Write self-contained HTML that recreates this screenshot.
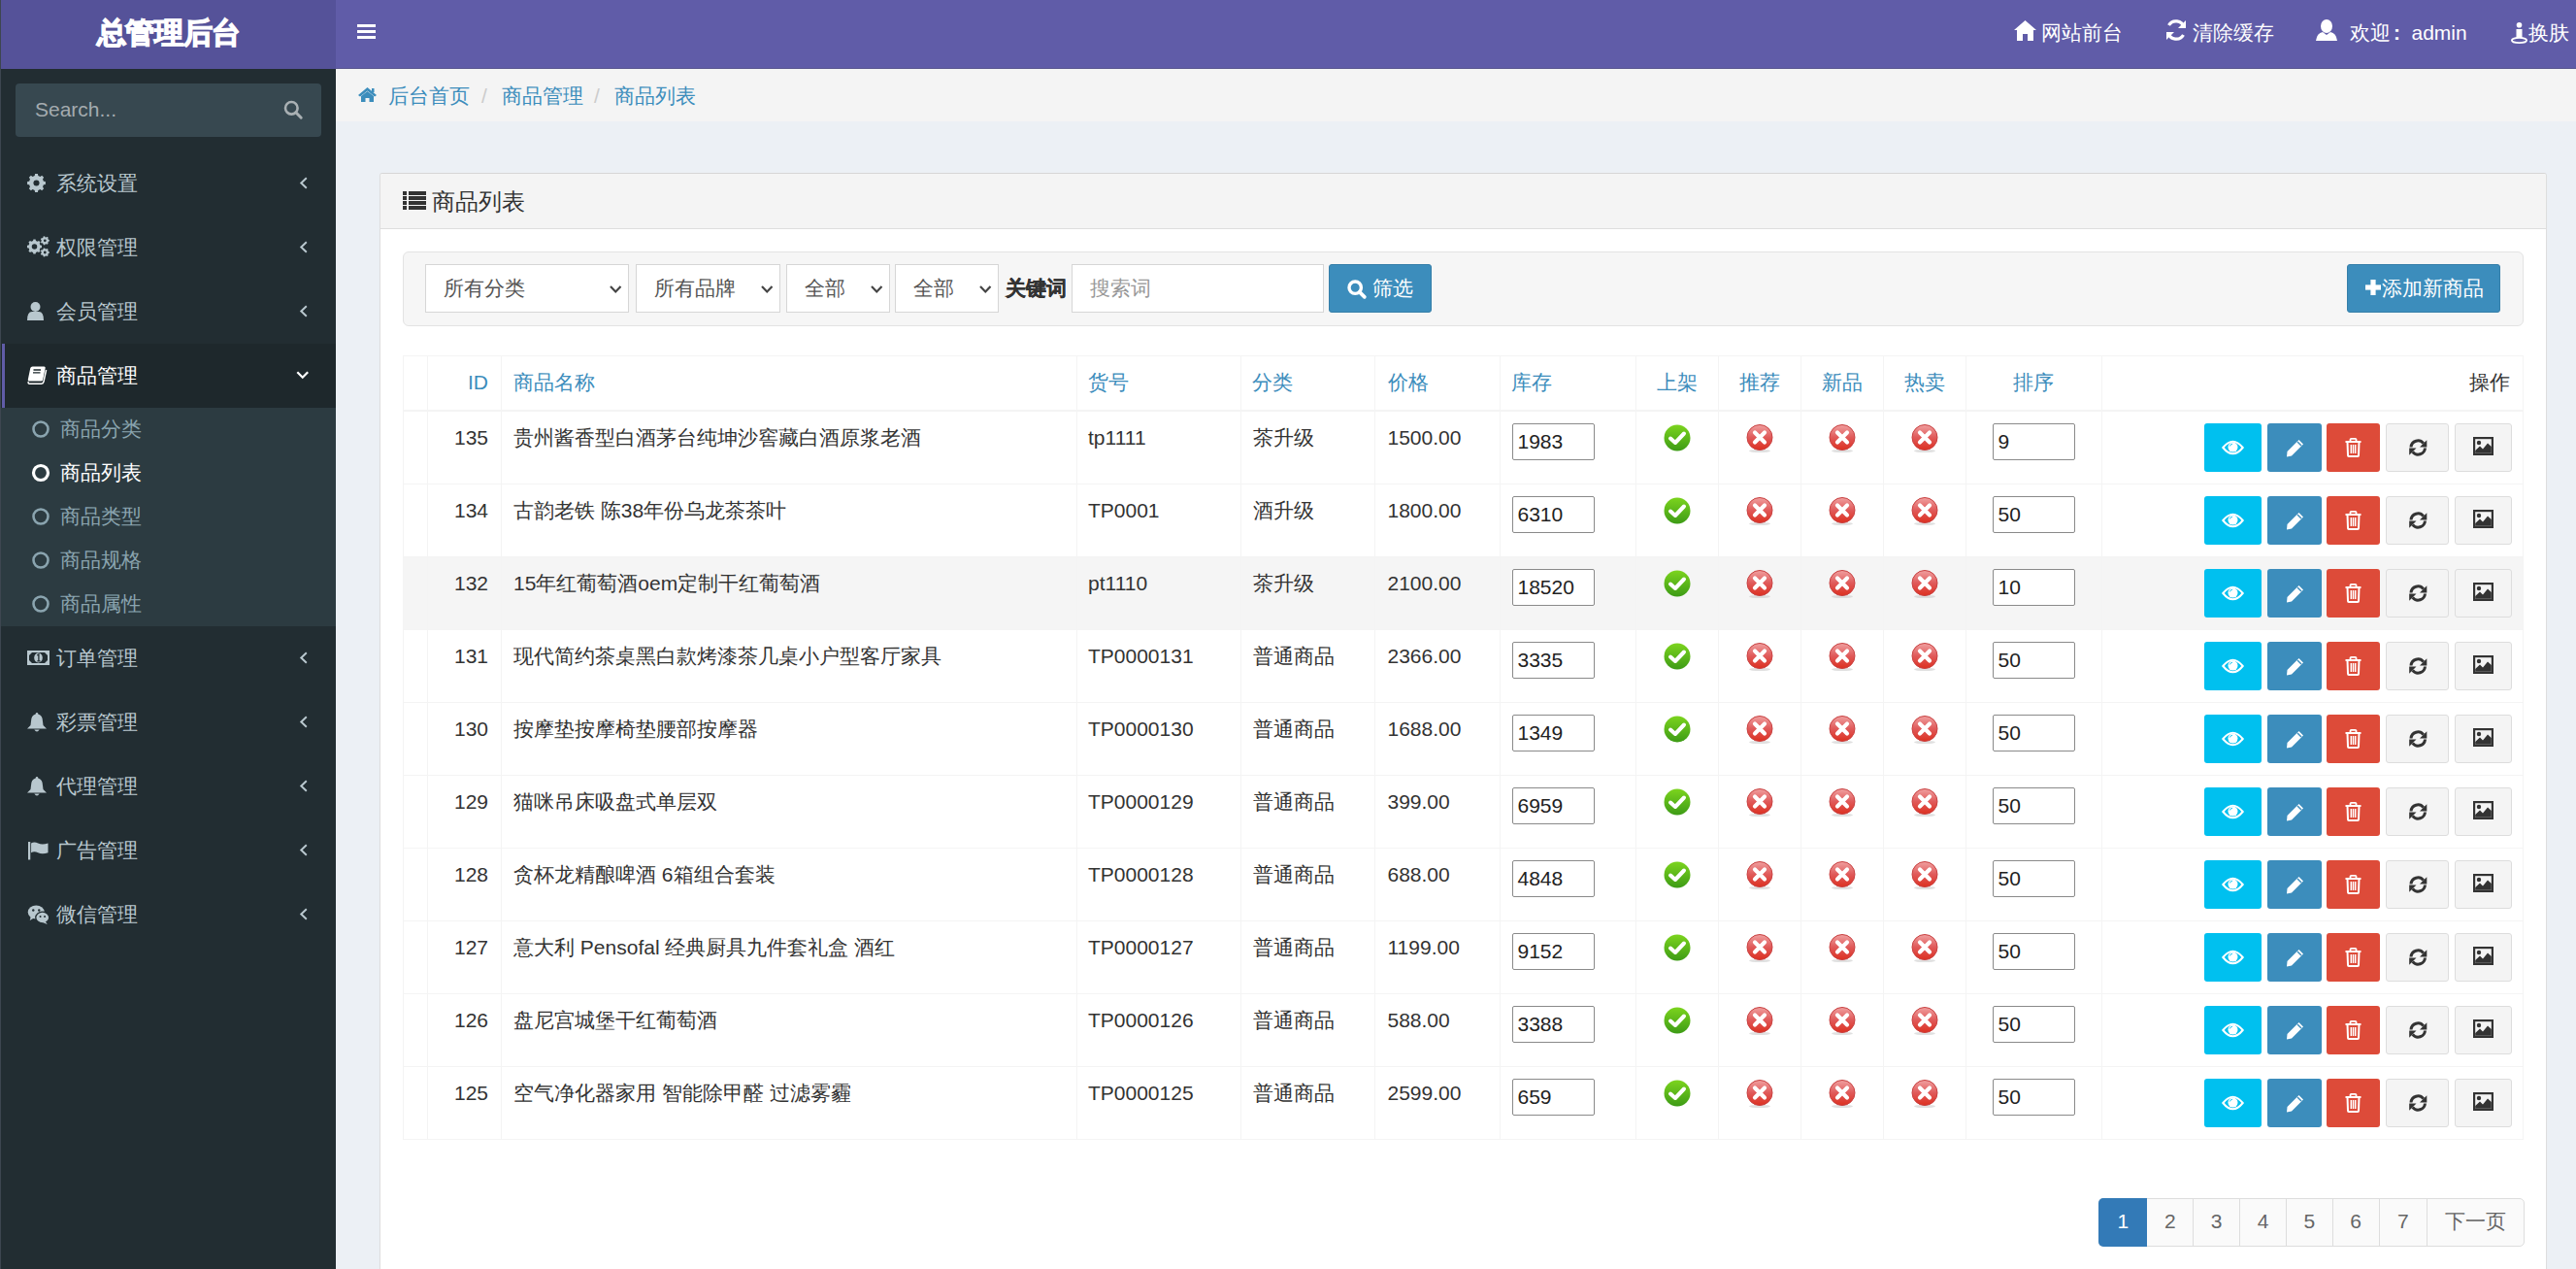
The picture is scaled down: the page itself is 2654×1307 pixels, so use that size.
<!DOCTYPE html><html><head><meta charset="utf-8"><style>
html,body{margin:0;padding:0;}
body{width:2654px;height:1307px;overflow:hidden;position:relative;background:#ecf0f5;font-family:"Liberation Sans",sans-serif;color:#333;}
div,span{box-sizing:border-box;}
.t{position:absolute;white-space:nowrap;}
svg{overflow:visible}
</style></head><body>
<div style="position:absolute;left:0px;top:0px;width:346px;height:71px;background:#555299;"></div>
<div class="t" style="left:99.5px;top:19.0px;font-size:30px;line-height:30px;color:#fff;font-weight:bold;-webkit-text-stroke:1.3px #fff;letter-spacing:-0.3px;">总管理后台</div>
<div style="position:absolute;left:346px;top:0px;width:2308px;height:71px;background:#605ca8;border-bottom:1px solid #5a578f;"></div>
<div style="position:absolute;left:368px;top:25px;width:19px;height:3px;background:#fff;"></div>
<div style="position:absolute;left:368px;top:31px;width:19px;height:3px;background:#fff;"></div>
<div style="position:absolute;left:368px;top:37px;width:19px;height:3px;background:#fff;"></div>
<svg width="23" height="22" viewBox="0 0 23 22" style="position:absolute;left:2075px;top:20px;"><path d="M11.5 1 L23 11 L20 11 L20 22 L14 22 L14 15 L9 15 L9 22 L3 22 L3 11 L0 11 Z" fill="#fff"/></svg>
<div class="t" style="left:2103px;top:22.5px;font-size:21px;line-height:21px;color:#fff;">网站前台</div>
<svg width="22" height="22" viewBox="0 0 22 22" style="position:absolute;left:2231px;top:20px;"><path d="M19 8 A8.5 8.5 0 0 0 3.5 6" stroke="#fff" stroke-width="3.2" fill="none"/><path d="M21 1 L21 9 L13 9 Z" fill="#fff"/><path d="M3 14 A8.5 8.5 0 0 0 18.5 16" stroke="#fff" stroke-width="3.2" fill="none"/><path d="M1 21 L1 13 L9 13 Z" fill="#fff"/></svg>
<div class="t" style="left:2259px;top:22.5px;font-size:21px;line-height:21px;color:#fff;">清除缓存</div>
<svg width="22" height="22" viewBox="0 0 22 22" style="position:absolute;left:2386px;top:20px;"><ellipse cx="11" cy="7" rx="6" ry="7" fill="#fff"/><path d="M0 22 Q1 14 7 13 L11 16 L15 13 Q21 14 22 22 Z" fill="#fff"/></svg>
<div class="t" style="left:2421px;top:22.5px;font-size:21px;line-height:21px;color:#fff;">欢迎</div>
<div class="t" style="left:2466px;top:22.5px;font-size:21px;line-height:21px;color:#fff;font-weight:bold;">:</div>
<div class="t" style="left:2484.5px;top:22.5px;font-size:21px;line-height:21px;color:#fff;">admin</div>
<svg width="18" height="22" viewBox="0 0 18 22" style="position:absolute;left:2587px;top:22.5px;"><circle cx="8.5" cy="2.8" r="2.8" fill="#fff"/><path d="M5.5 7 L11.5 7 L11.5 16 L5.5 16 Z" fill="#fff"/><ellipse cx="8.5" cy="18.5" rx="7.6" ry="2.6" fill="none" stroke="#fff" stroke-width="1.8"/></svg>
<div class="t" style="left:2605px;top:22.5px;font-size:21px;line-height:21px;color:#fff;">换肤</div>
<div style="position:absolute;left:0px;top:71px;width:346px;height:1236px;background:#222d32;"></div>
<div style="position:absolute;left:16px;top:86px;width:315px;height:55px;background:#374850;border-radius:4px;"></div>
<div class="t" style="left:36px;top:101.5px;font-size:21px;line-height:21px;color:#a4abaf;">Search...</div>
<svg width="20" height="20" viewBox="0 0 20 20" style="position:absolute;left:292px;top:103px;"><circle cx="8.3" cy="8.3" r="6.3" stroke="#a9b0b3" stroke-width="2.6" fill="none"/><path d="M12.8 12.8 L18.2 18.2" stroke="#a9b0b3" stroke-width="3" stroke-linecap="round"/></svg>
<div class="t" style="left:58px;top:177.5px;font-size:21px;line-height:21px;color:#b8c7ce;">系统设置</div>
<svg width="10" height="13" viewBox="0 0 10 13" style="position:absolute;left:308px;top:181.8px;"><path d="M7.8 1.3 L2.3 6.5 L7.8 11.7" stroke="#b8c7ce" stroke-width="2.0" fill="none"/></svg>
<div class="t" style="left:58px;top:243.5px;font-size:21px;line-height:21px;color:#b8c7ce;">权限管理</div>
<svg width="10" height="13" viewBox="0 0 10 13" style="position:absolute;left:308px;top:247.8px;"><path d="M7.8 1.3 L2.3 6.5 L7.8 11.7" stroke="#b8c7ce" stroke-width="2.0" fill="none"/></svg>
<div class="t" style="left:58px;top:309.5px;font-size:21px;line-height:21px;color:#b8c7ce;">会员管理</div>
<svg width="10" height="13" viewBox="0 0 10 13" style="position:absolute;left:308px;top:313.8px;"><path d="M7.8 1.3 L2.3 6.5 L7.8 11.7" stroke="#b8c7ce" stroke-width="2.0" fill="none"/></svg>
<div style="position:absolute;left:0px;top:354px;width:346px;height:66px;background:#1e282c;"></div>
<div style="position:absolute;left:1.5px;top:354px;width:3.5px;height:66px;background:#605ca8;"></div>
<div class="t" style="left:58px;top:375.5px;font-size:21px;line-height:21px;color:#fff;">商品管理</div>
<svg width="13.5" height="9" viewBox="0 0 13.5 9" style="position:absolute;left:305.2px;top:381.5px;"><path d="M1.3 1.2 L6.75 6.7 L12.2 1.2" stroke="#fff" stroke-width="2.2" fill="none"/></svg>
<svg width="19" height="19" viewBox="0 0 19 19" style="position:absolute;left:28px;top:179px;"><polygon points="16.88,7.67 18.89,8.09 18.89,10.91 16.88,11.33 16.01,13.42 17.14,15.14 15.14,17.14 13.42,16.01 11.33,16.88 10.91,18.89 8.09,18.89 7.67,16.88 5.58,16.01 3.86,17.14 1.86,15.14 2.99,13.42 2.12,11.33 0.11,10.91 0.11,8.09 2.12,7.67 2.99,5.58 1.86,3.86 3.86,1.86 5.58,2.99 7.67,2.12 8.09,0.11 10.91,0.11 11.33,2.12 13.42,2.99 15.14,1.86 17.14,3.86 16.01,5.58" fill="#b8c7ce"/><circle cx="9.5" cy="9.5" r="3.04" fill="#222d32"/></svg>
<svg width="23" height="22" viewBox="0 0 23 22" style="position:absolute;left:28px;top:243px;"><polygon points="13.40,9.53 15.02,9.87 15.02,12.13 13.40,12.47 12.71,14.14 13.61,15.52 12.02,17.11 10.64,16.21 8.97,16.90 8.63,18.52 6.37,18.52 6.03,16.90 4.36,16.21 2.98,17.11 1.39,15.52 2.29,14.14 1.60,12.47 -0.02,12.13 -0.02,9.87 1.60,9.53 2.29,7.86 1.39,6.48 2.98,4.89 4.36,5.79 6.03,5.10 6.37,3.48 8.63,3.48 8.97,5.10 10.64,5.79 12.02,4.89 13.61,6.48 12.71,7.86" fill="#b8c7ce"/><circle cx="7.5" cy="11" r="2.74" fill="#222d32"/><polygon points="21.84,3.79 22.83,4.02 22.83,5.58 21.84,5.81 21.30,6.94 21.74,7.86 20.52,8.83 19.72,8.20 18.50,8.47 18.05,9.39 16.53,9.05 16.53,8.02 15.55,7.25 14.55,7.47 13.88,6.06 14.67,5.42 14.67,4.18 13.88,3.54 14.55,2.13 15.55,2.35 16.53,1.58 16.53,0.55 18.05,0.21 18.50,1.13 19.72,1.40 20.52,0.77 21.74,1.74 21.30,2.66" fill="#b8c7ce"/><circle cx="18.3" cy="4.8" r="1.38" fill="#222d32"/><polygon points="21.84,15.99 22.83,16.22 22.83,17.78 21.84,18.01 21.30,19.14 21.74,20.06 20.52,21.03 19.72,20.40 18.50,20.67 18.05,21.59 16.53,21.25 16.53,20.22 15.55,19.45 14.55,19.67 13.88,18.26 14.67,17.62 14.67,16.38 13.88,15.74 14.55,14.33 15.55,14.55 16.53,13.78 16.53,12.75 18.05,12.41 18.50,13.33 19.72,13.60 20.52,12.97 21.74,13.94 21.30,14.86" fill="#b8c7ce"/><circle cx="18.3" cy="17" r="1.38" fill="#222d32"/></svg>
<svg width="17" height="19" viewBox="0 0 17 19" style="position:absolute;left:28px;top:311px;"><circle cx="8.5" cy="5" r="5" fill="#b8c7ce"/><path d="M0 19 Q0 10 5 10 L12 10 Q17 10 17 19 Z" fill="#b8c7ce"/></svg>
<svg width="20" height="19" viewBox="0 0 20 19" style="position:absolute;left:28px;top:377px;"><path d="M5.5 0.5 L17.5 0.5 Q19 0.5 18.7 2 L16.2 14 Q15.9 15.5 14.4 15.5 L2 15.5 Q0.5 15.5 0.8 14 L3.3 2 Q3.7 0.5 5.5 0.5 Z" fill="#fff"/><path d="M1.2 16.2 Q0.8 18.2 2.6 18.2 L14.6 18.2 Q16.6 18.2 17 16.2 L19.6 4" stroke="#fff" stroke-width="1.5" fill="none"/><path d="M6.5 4 L14 4 M6 6.8 L13.5 6.8" stroke="#1e282c" stroke-width="1.3"/></svg>
<div style="position:absolute;left:0px;top:420px;width:346px;height:225px;background:#2c3b41;"></div>
<svg width="18" height="18" viewBox="0 0 18 18" style="position:absolute;left:33px;top:433px;"><circle cx="9" cy="9" r="7.5" stroke="#8aa4af" stroke-width="2.6" fill="none"/></svg>
<div class="t" style="left:62px;top:430.5px;font-size:21px;line-height:21px;color:#8aa4af;">商品分类</div>
<svg width="18" height="18" viewBox="0 0 18 18" style="position:absolute;left:33px;top:478px;"><circle cx="9" cy="9" r="7.5" stroke="#fff" stroke-width="3.2" fill="none"/></svg>
<div class="t" style="left:62px;top:475.5px;font-size:21px;line-height:21px;color:#fff;">商品列表</div>
<svg width="18" height="18" viewBox="0 0 18 18" style="position:absolute;left:33px;top:523px;"><circle cx="9" cy="9" r="7.5" stroke="#8aa4af" stroke-width="2.6" fill="none"/></svg>
<div class="t" style="left:62px;top:520.5px;font-size:21px;line-height:21px;color:#8aa4af;">商品类型</div>
<svg width="18" height="18" viewBox="0 0 18 18" style="position:absolute;left:33px;top:568px;"><circle cx="9" cy="9" r="7.5" stroke="#8aa4af" stroke-width="2.6" fill="none"/></svg>
<div class="t" style="left:62px;top:565.5px;font-size:21px;line-height:21px;color:#8aa4af;">商品规格</div>
<svg width="18" height="18" viewBox="0 0 18 18" style="position:absolute;left:33px;top:613px;"><circle cx="9" cy="9" r="7.5" stroke="#8aa4af" stroke-width="2.6" fill="none"/></svg>
<div class="t" style="left:62px;top:610.5px;font-size:21px;line-height:21px;color:#8aa4af;">商品属性</div>
<div class="t" style="left:58px;top:666.5px;font-size:21px;line-height:21px;color:#b8c7ce;">订单管理</div>
<svg width="10" height="13" viewBox="0 0 10 13" style="position:absolute;left:308px;top:670.8px;"><path d="M7.8 1.3 L2.3 6.5 L7.8 11.7" stroke="#b8c7ce" stroke-width="2.0" fill="none"/></svg>
<div class="t" style="left:58px;top:732.5px;font-size:21px;line-height:21px;color:#b8c7ce;">彩票管理</div>
<svg width="10" height="13" viewBox="0 0 10 13" style="position:absolute;left:308px;top:736.8px;"><path d="M7.8 1.3 L2.3 6.5 L7.8 11.7" stroke="#b8c7ce" stroke-width="2.0" fill="none"/></svg>
<div class="t" style="left:58px;top:798.5px;font-size:21px;line-height:21px;color:#b8c7ce;">代理管理</div>
<svg width="10" height="13" viewBox="0 0 10 13" style="position:absolute;left:308px;top:802.8px;"><path d="M7.8 1.3 L2.3 6.5 L7.8 11.7" stroke="#b8c7ce" stroke-width="2.0" fill="none"/></svg>
<div class="t" style="left:58px;top:864.5px;font-size:21px;line-height:21px;color:#b8c7ce;">广告管理</div>
<svg width="10" height="13" viewBox="0 0 10 13" style="position:absolute;left:308px;top:868.8px;"><path d="M7.8 1.3 L2.3 6.5 L7.8 11.7" stroke="#b8c7ce" stroke-width="2.0" fill="none"/></svg>
<div class="t" style="left:58px;top:930.5px;font-size:21px;line-height:21px;color:#b8c7ce;">微信管理</div>
<svg width="10" height="13" viewBox="0 0 10 13" style="position:absolute;left:308px;top:934.8px;"><path d="M7.8 1.3 L2.3 6.5 L7.8 11.7" stroke="#b8c7ce" stroke-width="2.0" fill="none"/></svg>
<svg width="23" height="15" viewBox="0 0 23 15" style="position:absolute;left:28px;top:670px;"><rect x="0" y="0" width="23" height="15" fill="#b8c7ce"/><path d="M5 2 L18 2 L21 5 L21 10 L18 13 L5 13 L2 10 L2 5 Z" fill="#222d32"/><ellipse cx="11.5" cy="7.5" rx="4.3" ry="5" fill="#b8c7ce"/><path d="M10.2 5 L11.9 4 L11.9 10.8 M10.3 10.8 L13.5 10.8" stroke="#222d32" stroke-width="1.3" fill="none"/></svg>
<svg width="18" height="20" viewBox="0 0 18 20" style="position:absolute;left:29px;top:734px;"><path d="M9 0 Q10.3 0 10.3 1.4 Q15 2.8 15 9 L15.5 13 L19 16.5 L-1 16.5 L2.5 13 L3 9 Q3 2.8 7.7 1.4 Q7.7 0 9 0 Z" fill="#b8c7ce"/><path d="M6.3 17.5 Q9 21.5 11.7 17.5 Z" fill="#b8c7ce"/></svg>
<svg width="18" height="20" viewBox="0 0 18 20" style="position:absolute;left:29px;top:800px;"><path d="M9 0 Q10.3 0 10.3 1.4 Q15 2.8 15 9 L15.5 13 L19 16.5 L-1 16.5 L2.5 13 L3 9 Q3 2.8 7.7 1.4 Q7.7 0 9 0 Z" fill="#b8c7ce"/><path d="M6.3 17.5 Q9 21.5 11.7 17.5 Z" fill="#b8c7ce"/></svg>
<svg width="20.5" height="18.5" viewBox="0 0 20 18" style="position:absolute;left:29px;top:867px;"><rect x="0" y="0" width="2.2" height="18" fill="#b8c7ce"/><path d="M3 1.5 Q6 -0.5 10 1.5 Q14 3.5 20 1.5 L20 11 Q14 13 10 11 Q6 9 3 11 Z" fill="#b8c7ce"/></svg>
<svg width="23.5" height="20" viewBox="0 0 22 20" style="position:absolute;left:28px;top:931.5px;"><ellipse cx="8.5" cy="7.5" rx="8.5" ry="7" fill="#b8c7ce"/><path d="M3 12 L2 16 L7 13 Z" fill="#b8c7ce"/><ellipse cx="15" cy="13" rx="7" ry="5.8" fill="#b8c7ce" stroke="#222d32" stroke-width="1.3"/><path d="M18 17 L20 20 L15 18 Z" fill="#b8c7ce"/><circle cx="5.5" cy="5.5" r="1.2" fill="#222d32"/><circle cx="11.5" cy="5.5" r="1.2" fill="#222d32"/><circle cx="12.8" cy="12" r="1" fill="#222d32"/><circle cx="17.3" cy="12" r="1" fill="#222d32"/></svg>
<div style="position:absolute;left:0px;top:0px;width:1px;height:1307px;background:#3d4650;"></div>
<div style="position:absolute;left:346px;top:71px;width:2308px;height:54px;background:#f4f4f4;"></div>
<svg width="19" height="15" viewBox="0 0 19 15" style="position:absolute;left:369px;top:90px;"><path d="M9.5 0 L19 8 L17 9.5 L9.5 3.5 L2 9.5 L0 8 Z" fill="#3c8dbc"/><path d="M3 9 L9.5 4 L16 9 L16 15 L11.5 15 L11.5 11 L7.5 11 L7.5 15 L3 15 Z" fill="#3c8dbc"/><rect x="14" y="1" width="2.5" height="4" fill="#3c8dbc"/></svg>
<div class="t" style="left:400px;top:87.5px;font-size:21px;line-height:21px;color:#3c8dbc;">后台首页</div>
<div class="t" style="left:496px;top:87.5px;font-size:21px;line-height:21px;color:#ccc;">/</div>
<div class="t" style="left:517px;top:87.5px;font-size:21px;line-height:21px;color:#3c8dbc;">商品管理</div>
<div class="t" style="left:612px;top:87.5px;font-size:21px;line-height:21px;color:#ccc;">/</div>
<div class="t" style="left:633px;top:87.5px;font-size:21px;line-height:21px;color:#3c8dbc;">商品列表</div>
<div style="position:absolute;left:391px;top:177.5px;width:2233px;height:1200px;background:#fff;border:1px solid #dedede;border-top:1.5px solid #d6d6d6;border-radius:3px;box-shadow:0 1px 1px rgba(0,0,0,0.06);"></div>
<div style="position:absolute;left:392px;top:179px;width:2231px;height:57px;background:#f4f4f4;border-bottom:1.5px solid #dedede;border-radius:3px 3px 0 0;"></div>
<svg width="24" height="19" viewBox="0 0 24 19" style="position:absolute;left:415px;top:197px;"><rect x="0" y="0" width="4" height="4" fill="#333"/><rect x="6" y="0" width="18" height="4" fill="#333"/><rect x="0" y="5" width="4" height="4" fill="#333"/><rect x="6" y="5" width="18" height="4" fill="#333"/><rect x="0" y="10" width="4" height="4" fill="#333"/><rect x="6" y="10" width="18" height="4" fill="#333"/><rect x="0" y="15" width="4" height="4" fill="#333"/><rect x="6" y="15" width="18" height="4" fill="#333"/></svg>
<div class="t" style="left:445px;top:196.0px;font-size:24px;line-height:24px;color:#333;">商品列表</div>
<div style="position:absolute;left:415px;top:259px;width:2185px;height:77px;background:#f6f6f6;border:1px solid #e3e3e3;border-radius:6px;"></div>
<div style="position:absolute;left:438px;top:272px;width:210px;height:50px;background:#fff;border:1px solid #d6d6d6;"></div><div class="t" style="left:457px;top:285.5px;font-size:21px;line-height:21px;color:#555;">所有分类</div><svg width="12.5" height="8" viewBox="0 0 12.5 8" style="position:absolute;left:628px;top:294px;"><path d="M1 1 L6.25 6.5 L11.5 1" stroke="#444" stroke-width="2.2" fill="none"/></svg>
<div style="position:absolute;left:655px;top:272px;width:149px;height:50px;background:#fff;border:1px solid #d6d6d6;"></div><div class="t" style="left:674px;top:285.5px;font-size:21px;line-height:21px;color:#555;">所有品牌</div><svg width="12.5" height="8" viewBox="0 0 12.5 8" style="position:absolute;left:784px;top:294px;"><path d="M1 1 L6.25 6.5 L11.5 1" stroke="#444" stroke-width="2.2" fill="none"/></svg>
<div style="position:absolute;left:810px;top:272px;width:106.5px;height:50px;background:#fff;border:1px solid #d6d6d6;"></div><div class="t" style="left:829px;top:285.5px;font-size:21px;line-height:21px;color:#555;">全部</div><svg width="12.5" height="8" viewBox="0 0 12.5 8" style="position:absolute;left:896.5px;top:294px;"><path d="M1 1 L6.25 6.5 L11.5 1" stroke="#444" stroke-width="2.2" fill="none"/></svg>
<div style="position:absolute;left:922px;top:272px;width:106.5px;height:50px;background:#fff;border:1px solid #d6d6d6;"></div><div class="t" style="left:941px;top:285.5px;font-size:21px;line-height:21px;color:#555;">全部</div><svg width="12.5" height="8" viewBox="0 0 12.5 8" style="position:absolute;left:1008.5px;top:294px;"><path d="M1 1 L6.25 6.5 L11.5 1" stroke="#444" stroke-width="2.2" fill="none"/></svg>
<div class="t" style="left:1035.5px;top:285.5px;font-size:21px;line-height:21px;color:#333;font-weight:bold;-webkit-text-stroke:0.3px #333;">关键词</div>
<div style="position:absolute;left:1104px;top:272px;width:260px;height:50px;background:#fff;border:1px solid #d6d6d6;"></div>
<div class="t" style="left:1123px;top:285.5px;font-size:21px;line-height:21px;color:#999;">搜索词</div>
<div style="position:absolute;left:1369px;top:272px;width:106px;height:50px;background:#3c8dbc;border:1px solid #367fa9;border-radius:3px;"></div>
<svg width="20" height="20" viewBox="0 0 20 20" style="position:absolute;left:1388px;top:287.5px;"><circle cx="8.2" cy="8.2" r="6.2" stroke="#fff" stroke-width="3.4" fill="none"/><path d="M12.8 12.8 L17.8 17.8" stroke="#fff" stroke-width="3.8" stroke-linecap="round"/></svg>
<div class="t" style="left:1413.5px;top:286.0px;font-size:21px;line-height:21px;color:#fff;">筛选</div>
<div style="position:absolute;left:2418px;top:272px;width:158px;height:50px;background:#3c8dbc;border:1px solid #367fa9;border-radius:3px;"></div>
<svg width="16" height="16" viewBox="0 0 16 16" style="position:absolute;left:2437px;top:287.5px;"><rect x="5.4" y="0" width="5.2" height="16" fill="#fff"/><rect x="0" y="5.4" width="16" height="5.2" fill="#fff"/></svg>
<div class="t" style="left:2454px;top:285.5px;font-size:21px;line-height:21px;color:#fff;">添加新商品</div>
<div style="position:absolute;left:415px;top:573.5px;width:2185px;height:75.0px;background:#f5f5f5;"></div>
<div style="position:absolute;left:415px;top:366px;width:2185px;height:807.5px;border:1.5px solid #f4f4f4;"></div>
<div style="position:absolute;left:440.0px;top:366px;width:1.2px;height:807.5px;background:#f4f4f4;"></div>
<div style="position:absolute;left:515.5px;top:366px;width:1.2px;height:807.5px;background:#f4f4f4;"></div>
<div style="position:absolute;left:1108.5px;top:366px;width:1.2px;height:807.5px;background:#f4f4f4;"></div>
<div style="position:absolute;left:1277.5px;top:366px;width:1.2px;height:807.5px;background:#f4f4f4;"></div>
<div style="position:absolute;left:1415.5px;top:366px;width:1.2px;height:807.5px;background:#f4f4f4;"></div>
<div style="position:absolute;left:1544.5px;top:366px;width:1.2px;height:807.5px;background:#f4f4f4;"></div>
<div style="position:absolute;left:1684.5px;top:366px;width:1.2px;height:807.5px;background:#f4f4f4;"></div>
<div style="position:absolute;left:1769.9px;top:366px;width:1.2px;height:807.5px;background:#f4f4f4;"></div>
<div style="position:absolute;left:1854.9px;top:366px;width:1.2px;height:807.5px;background:#f4f4f4;"></div>
<div style="position:absolute;left:1939.9px;top:366px;width:1.2px;height:807.5px;background:#f4f4f4;"></div>
<div style="position:absolute;left:2025.0px;top:366px;width:1.2px;height:807.5px;background:#f4f4f4;"></div>
<div style="position:absolute;left:2164.5px;top:366px;width:1.2px;height:807.5px;background:#f4f4f4;"></div>
<div style="position:absolute;left:415px;top:421.5px;width:2185px;height:2px;background:#f4f4f4;"></div>
<div style="position:absolute;left:415px;top:497.5px;width:2185px;height:1.5px;background:#f4f4f4;"></div>
<div style="position:absolute;left:415px;top:572.5px;width:2185px;height:1.5px;background:#f4f4f4;"></div>
<div style="position:absolute;left:415px;top:647.5px;width:2185px;height:1.5px;background:#f4f4f4;"></div>
<div style="position:absolute;left:415px;top:722.5px;width:2185px;height:1.5px;background:#f4f4f4;"></div>
<div style="position:absolute;left:415px;top:797.5px;width:2185px;height:1.5px;background:#f4f4f4;"></div>
<div style="position:absolute;left:415px;top:872.5px;width:2185px;height:1.5px;background:#f4f4f4;"></div>
<div style="position:absolute;left:415px;top:947.5px;width:2185px;height:1.5px;background:#f4f4f4;"></div>
<div style="position:absolute;left:415px;top:1022.5px;width:2185px;height:1.5px;background:#f4f4f4;"></div>
<div style="position:absolute;left:415px;top:1097.5px;width:2185px;height:1.5px;background:#f4f4f4;"></div>
<div class="t" style="right:2151px;top:383.0px;font-size:21px;line-height:21px;color:#3c8dbc;text-align:right;">ID</div>
<div class="t" style="left:529px;top:383.0px;font-size:21px;line-height:21px;color:#3c8dbc;">商品名称</div>
<div class="t" style="left:1121px;top:383.0px;font-size:21px;line-height:21px;color:#3c8dbc;">货号</div>
<div class="t" style="left:1290px;top:383.0px;font-size:21px;line-height:21px;color:#3c8dbc;">分类</div>
<div class="t" style="left:1430px;top:383.0px;font-size:21px;line-height:21px;color:#3c8dbc;">价格</div>
<div class="t" style="left:1557px;top:383.0px;font-size:21px;line-height:21px;color:#3c8dbc;">库存</div>
<div class="t" style="left:1527.5px;width:400px;text-align:center;top:383.0px;font-size:21px;line-height:21px;color:#3c8dbc;">上架</div>
<div class="t" style="left:1612.5px;width:400px;text-align:center;top:383.0px;font-size:21px;line-height:21px;color:#3c8dbc;">推荐</div>
<div class="t" style="left:1697.5px;width:400px;text-align:center;top:383.0px;font-size:21px;line-height:21px;color:#3c8dbc;">新品</div>
<div class="t" style="left:1782.5px;width:400px;text-align:center;top:383.0px;font-size:21px;line-height:21px;color:#3c8dbc;">热卖</div>
<div class="t" style="left:1895px;width:400px;text-align:center;top:383.0px;font-size:21px;line-height:21px;color:#3c8dbc;">排序</div>
<div class="t" style="right:68px;top:383.0px;font-size:21px;line-height:21px;color:#333;text-align:right;">操作</div>
<div class="t" style="right:2151px;top:440.0px;font-size:21px;line-height:21px;color:#333;text-align:right;">135</div>
<div class="t" style="left:529px;top:440.0px;font-size:21px;line-height:21px;color:#333;">贵州酱香型白酒茅台纯坤沙窖藏白酒原浆老酒</div>
<div class="t" style="left:1121px;top:440.0px;font-size:21px;line-height:21px;color:#333;">tp1111</div>
<div class="t" style="left:1291px;top:440.0px;font-size:21px;line-height:21px;color:#333;">茶升级</div>
<div class="t" style="left:1429.5px;top:440.0px;font-size:21px;line-height:21px;color:#333;">1500.00</div>
<div style="position:absolute;left:1558px;top:436.3px;width:85px;height:38px;background:#fff;border:1px solid #8a8a8a;border-radius:2px;"></div>
<div class="t" style="left:1563.5px;top:443.8px;font-size:21px;line-height:21px;color:#222;">1983</div>
<div style="position:absolute;left:2053px;top:436.3px;width:85px;height:38px;background:#fff;border:1px solid #8a8a8a;border-radius:2px;"></div>
<div class="t" style="left:2058.5px;top:443.8px;font-size:21px;line-height:21px;color:#222;">9</div>
<svg width="28" height="28" viewBox="0 0 28 28" style="position:absolute;left:1714px;top:437.0px;"><defs><linearGradient id="gg" x1="0" y1="0" x2="0" y2="1"><stop offset="0" stop-color="#7cd41e"/><stop offset="1" stop-color="#3d9b16"/></linearGradient></defs><circle cx="14" cy="14" r="13.5" fill="url(#gg)"/><path d="M7 14.5 L12 19 L21 9.5" stroke="#fff" stroke-width="4" fill="none" stroke-linecap="round" stroke-linejoin="round"/></svg>
<svg width="28" height="30" viewBox="0 0 28 30" style="position:absolute;left:1799px;top:436.5px;"><defs><linearGradient id="rg" x1="0" y1="0" x2="0" y2="1"><stop offset="0" stop-color="#f0a0a0"/><stop offset="0.5" stop-color="#e05a5a"/><stop offset="1" stop-color="#dd3020"/></linearGradient></defs><ellipse cx="14" cy="27.5" rx="11" ry="1.6" fill="#ccc" opacity="0.6"/><circle cx="14" cy="13.5" r="13" fill="url(#rg)" stroke="#c84040" stroke-width="1"/><path d="M9 8.5 L19 18.5 M19 8.5 L9 18.5" stroke="#fff" stroke-width="4.2" stroke-linecap="round"/></svg>
<svg width="28" height="30" viewBox="0 0 28 30" style="position:absolute;left:1884px;top:436.5px;"><defs><linearGradient id="rg" x1="0" y1="0" x2="0" y2="1"><stop offset="0" stop-color="#f0a0a0"/><stop offset="0.5" stop-color="#e05a5a"/><stop offset="1" stop-color="#dd3020"/></linearGradient></defs><ellipse cx="14" cy="27.5" rx="11" ry="1.6" fill="#ccc" opacity="0.6"/><circle cx="14" cy="13.5" r="13" fill="url(#rg)" stroke="#c84040" stroke-width="1"/><path d="M9 8.5 L19 18.5 M19 8.5 L9 18.5" stroke="#fff" stroke-width="4.2" stroke-linecap="round"/></svg>
<svg width="28" height="30" viewBox="0 0 28 30" style="position:absolute;left:1969px;top:436.5px;"><defs><linearGradient id="rg" x1="0" y1="0" x2="0" y2="1"><stop offset="0" stop-color="#f0a0a0"/><stop offset="0.5" stop-color="#e05a5a"/><stop offset="1" stop-color="#dd3020"/></linearGradient></defs><ellipse cx="14" cy="27.5" rx="11" ry="1.6" fill="#ccc" opacity="0.6"/><circle cx="14" cy="13.5" r="13" fill="url(#rg)" stroke="#c84040" stroke-width="1"/><path d="M9 8.5 L19 18.5 M19 8.5 L9 18.5" stroke="#fff" stroke-width="4.2" stroke-linecap="round"/></svg>
<div style="position:absolute;left:2271px;top:436.2px;width:59px;height:50px;background:#00c0ef;border-radius:3px;"></div>
<svg width="23" height="16" viewBox="0 0 23 16" style="position:absolute;left:2289px;top:453.2px;"><path d="M1.3 8 Q11.5 -4.5 21.7 8 Q11.5 20.5 1.3 8 Z" stroke="#fff" stroke-width="2" fill="none"/><circle cx="11.5" cy="7.6" r="5" fill="#fff"/><path d="M8.3 6.5 A3.2 3.2 0 0 1 11 4.2" stroke="#00c0ef" stroke-width="0.9" fill="none"/></svg>
<div style="position:absolute;left:2336px;top:436.2px;width:56px;height:50px;background:#3c8dbc;border-radius:3px;"></div>
<svg width="19" height="19" viewBox="0 0 19 19" style="position:absolute;left:2355px;top:452.2px;"><path d="M13.5 1 L18 5.5 L6 17.5 L1 18.5 L1.5 13 Z" fill="#fff"/><path d="M12 3 L16 7" stroke="#3c8dbc" stroke-width="1.4"/></svg>
<div style="position:absolute;left:2397px;top:436.2px;width:55px;height:50px;background:#dd4b39;border-radius:3px;"></div>
<svg width="17" height="20" viewBox="0 0 17 20" style="position:absolute;left:2416px;top:451.2px;"><path d="M0.5 4 L16.5 4" stroke="#fff" stroke-width="2"/><path d="M5.5 4 L5.5 1.5 Q5.5 0.8 6.5 0.8 L10.5 0.8 Q11.5 0.8 11.5 1.5 L11.5 4" stroke="#fff" stroke-width="1.8" fill="none"/><path d="M2.5 4 L3 18 Q3 19 4 19 L13 19 Q14 19 14 18 L14.5 4" stroke="#fff" stroke-width="2" fill="none"/><path d="M6.3 7 L6.3 16 M8.5 7 L8.5 16 M10.7 7 L10.7 16" stroke="#fff" stroke-width="1.5"/></svg>
<div style="position:absolute;left:2458px;top:436.2px;width:65px;height:50px;background:#f4f4f4;border:1.5px solid #ddd;border-radius:3px;"></div>
<svg width="18.5" height="18" viewBox="0 0 18.5 18" style="position:absolute;left:2481.5px;top:451.5px;"><path d="M2 8.5 A7.2 7.2 0 0 1 14.8 4.6" stroke="#333" stroke-width="3" fill="none"/><path d="M18.3 1.2 L18.3 8.6 L11 8.6 Z" fill="#333"/><path d="M16.5 9.5 A7.2 7.2 0 0 1 3.7 13.4" stroke="#333" stroke-width="3" fill="none"/><path d="M0.2 16.8 L0.2 9.4 L7.5 9.4 Z" fill="#333"/></svg>
<div style="position:absolute;left:2529px;top:436.2px;width:59px;height:50px;background:#f4f4f4;border:1.5px solid #ddd;border-radius:3px;"></div>
<svg width="21" height="19" viewBox="0 0 21 19" style="position:absolute;left:2548px;top:450.2px;"><rect x="0" y="0" width="21" height="19" fill="#333"/><rect x="2.2" y="2.2" width="16.6" height="14.6" fill="#f4f4f4"/><circle cx="6" cy="6" r="2.2" fill="#333"/><path d="M2.2 16.8 L2.2 14 L7 9.5 L10 12.5 L15 6.5 L18.8 10 L18.8 16.8 Z" fill="#333"/></svg>
<div class="t" style="right:2151px;top:515.0px;font-size:21px;line-height:21px;color:#333;text-align:right;">134</div>
<div class="t" style="left:529px;top:515.0px;font-size:21px;line-height:21px;color:#333;">古韵老铁 陈38年份乌龙茶茶叶</div>
<div class="t" style="left:1121px;top:515.0px;font-size:21px;line-height:21px;color:#333;">TP0001</div>
<div class="t" style="left:1291px;top:515.0px;font-size:21px;line-height:21px;color:#333;">酒升级</div>
<div class="t" style="left:1429.5px;top:515.0px;font-size:21px;line-height:21px;color:#333;">1800.00</div>
<div style="position:absolute;left:1558px;top:511.3px;width:85px;height:38px;background:#fff;border:1px solid #8a8a8a;border-radius:2px;"></div>
<div class="t" style="left:1563.5px;top:518.8px;font-size:21px;line-height:21px;color:#222;">6310</div>
<div style="position:absolute;left:2053px;top:511.3px;width:85px;height:38px;background:#fff;border:1px solid #8a8a8a;border-radius:2px;"></div>
<div class="t" style="left:2058.5px;top:518.8px;font-size:21px;line-height:21px;color:#222;">50</div>
<svg width="28" height="28" viewBox="0 0 28 28" style="position:absolute;left:1714px;top:512.0px;"><defs><linearGradient id="gg" x1="0" y1="0" x2="0" y2="1"><stop offset="0" stop-color="#7cd41e"/><stop offset="1" stop-color="#3d9b16"/></linearGradient></defs><circle cx="14" cy="14" r="13.5" fill="url(#gg)"/><path d="M7 14.5 L12 19 L21 9.5" stroke="#fff" stroke-width="4" fill="none" stroke-linecap="round" stroke-linejoin="round"/></svg>
<svg width="28" height="30" viewBox="0 0 28 30" style="position:absolute;left:1799px;top:511.5px;"><defs><linearGradient id="rg" x1="0" y1="0" x2="0" y2="1"><stop offset="0" stop-color="#f0a0a0"/><stop offset="0.5" stop-color="#e05a5a"/><stop offset="1" stop-color="#dd3020"/></linearGradient></defs><ellipse cx="14" cy="27.5" rx="11" ry="1.6" fill="#ccc" opacity="0.6"/><circle cx="14" cy="13.5" r="13" fill="url(#rg)" stroke="#c84040" stroke-width="1"/><path d="M9 8.5 L19 18.5 M19 8.5 L9 18.5" stroke="#fff" stroke-width="4.2" stroke-linecap="round"/></svg>
<svg width="28" height="30" viewBox="0 0 28 30" style="position:absolute;left:1884px;top:511.5px;"><defs><linearGradient id="rg" x1="0" y1="0" x2="0" y2="1"><stop offset="0" stop-color="#f0a0a0"/><stop offset="0.5" stop-color="#e05a5a"/><stop offset="1" stop-color="#dd3020"/></linearGradient></defs><ellipse cx="14" cy="27.5" rx="11" ry="1.6" fill="#ccc" opacity="0.6"/><circle cx="14" cy="13.5" r="13" fill="url(#rg)" stroke="#c84040" stroke-width="1"/><path d="M9 8.5 L19 18.5 M19 8.5 L9 18.5" stroke="#fff" stroke-width="4.2" stroke-linecap="round"/></svg>
<svg width="28" height="30" viewBox="0 0 28 30" style="position:absolute;left:1969px;top:511.5px;"><defs><linearGradient id="rg" x1="0" y1="0" x2="0" y2="1"><stop offset="0" stop-color="#f0a0a0"/><stop offset="0.5" stop-color="#e05a5a"/><stop offset="1" stop-color="#dd3020"/></linearGradient></defs><ellipse cx="14" cy="27.5" rx="11" ry="1.6" fill="#ccc" opacity="0.6"/><circle cx="14" cy="13.5" r="13" fill="url(#rg)" stroke="#c84040" stroke-width="1"/><path d="M9 8.5 L19 18.5 M19 8.5 L9 18.5" stroke="#fff" stroke-width="4.2" stroke-linecap="round"/></svg>
<div style="position:absolute;left:2271px;top:511.2px;width:59px;height:50px;background:#00c0ef;border-radius:3px;"></div>
<svg width="23" height="16" viewBox="0 0 23 16" style="position:absolute;left:2289px;top:528.2px;"><path d="M1.3 8 Q11.5 -4.5 21.7 8 Q11.5 20.5 1.3 8 Z" stroke="#fff" stroke-width="2" fill="none"/><circle cx="11.5" cy="7.6" r="5" fill="#fff"/><path d="M8.3 6.5 A3.2 3.2 0 0 1 11 4.2" stroke="#00c0ef" stroke-width="0.9" fill="none"/></svg>
<div style="position:absolute;left:2336px;top:511.2px;width:56px;height:50px;background:#3c8dbc;border-radius:3px;"></div>
<svg width="19" height="19" viewBox="0 0 19 19" style="position:absolute;left:2355px;top:527.2px;"><path d="M13.5 1 L18 5.5 L6 17.5 L1 18.5 L1.5 13 Z" fill="#fff"/><path d="M12 3 L16 7" stroke="#3c8dbc" stroke-width="1.4"/></svg>
<div style="position:absolute;left:2397px;top:511.2px;width:55px;height:50px;background:#dd4b39;border-radius:3px;"></div>
<svg width="17" height="20" viewBox="0 0 17 20" style="position:absolute;left:2416px;top:526.2px;"><path d="M0.5 4 L16.5 4" stroke="#fff" stroke-width="2"/><path d="M5.5 4 L5.5 1.5 Q5.5 0.8 6.5 0.8 L10.5 0.8 Q11.5 0.8 11.5 1.5 L11.5 4" stroke="#fff" stroke-width="1.8" fill="none"/><path d="M2.5 4 L3 18 Q3 19 4 19 L13 19 Q14 19 14 18 L14.5 4" stroke="#fff" stroke-width="2" fill="none"/><path d="M6.3 7 L6.3 16 M8.5 7 L8.5 16 M10.7 7 L10.7 16" stroke="#fff" stroke-width="1.5"/></svg>
<div style="position:absolute;left:2458px;top:511.2px;width:65px;height:50px;background:#f4f4f4;border:1.5px solid #ddd;border-radius:3px;"></div>
<svg width="18.5" height="18" viewBox="0 0 18.5 18" style="position:absolute;left:2481.5px;top:526.5px;"><path d="M2 8.5 A7.2 7.2 0 0 1 14.8 4.6" stroke="#333" stroke-width="3" fill="none"/><path d="M18.3 1.2 L18.3 8.6 L11 8.6 Z" fill="#333"/><path d="M16.5 9.5 A7.2 7.2 0 0 1 3.7 13.4" stroke="#333" stroke-width="3" fill="none"/><path d="M0.2 16.8 L0.2 9.4 L7.5 9.4 Z" fill="#333"/></svg>
<div style="position:absolute;left:2529px;top:511.2px;width:59px;height:50px;background:#f4f4f4;border:1.5px solid #ddd;border-radius:3px;"></div>
<svg width="21" height="19" viewBox="0 0 21 19" style="position:absolute;left:2548px;top:525.2px;"><rect x="0" y="0" width="21" height="19" fill="#333"/><rect x="2.2" y="2.2" width="16.6" height="14.6" fill="#f4f4f4"/><circle cx="6" cy="6" r="2.2" fill="#333"/><path d="M2.2 16.8 L2.2 14 L7 9.5 L10 12.5 L15 6.5 L18.8 10 L18.8 16.8 Z" fill="#333"/></svg>
<div class="t" style="right:2151px;top:590.0px;font-size:21px;line-height:21px;color:#333;text-align:right;">132</div>
<div class="t" style="left:529px;top:590.0px;font-size:21px;line-height:21px;color:#333;">15年红葡萄酒oem定制干红葡萄酒</div>
<div class="t" style="left:1121px;top:590.0px;font-size:21px;line-height:21px;color:#333;">pt1110</div>
<div class="t" style="left:1291px;top:590.0px;font-size:21px;line-height:21px;color:#333;">茶升级</div>
<div class="t" style="left:1429.5px;top:590.0px;font-size:21px;line-height:21px;color:#333;">2100.00</div>
<div style="position:absolute;left:1558px;top:586.3px;width:85px;height:38px;background:#fff;border:1px solid #8a8a8a;border-radius:2px;"></div>
<div class="t" style="left:1563.5px;top:593.8px;font-size:21px;line-height:21px;color:#222;">18520</div>
<div style="position:absolute;left:2053px;top:586.3px;width:85px;height:38px;background:#fff;border:1px solid #8a8a8a;border-radius:2px;"></div>
<div class="t" style="left:2058.5px;top:593.8px;font-size:21px;line-height:21px;color:#222;">10</div>
<svg width="28" height="28" viewBox="0 0 28 28" style="position:absolute;left:1714px;top:587.0px;"><defs><linearGradient id="gg" x1="0" y1="0" x2="0" y2="1"><stop offset="0" stop-color="#7cd41e"/><stop offset="1" stop-color="#3d9b16"/></linearGradient></defs><circle cx="14" cy="14" r="13.5" fill="url(#gg)"/><path d="M7 14.5 L12 19 L21 9.5" stroke="#fff" stroke-width="4" fill="none" stroke-linecap="round" stroke-linejoin="round"/></svg>
<svg width="28" height="30" viewBox="0 0 28 30" style="position:absolute;left:1799px;top:586.5px;"><defs><linearGradient id="rg" x1="0" y1="0" x2="0" y2="1"><stop offset="0" stop-color="#f0a0a0"/><stop offset="0.5" stop-color="#e05a5a"/><stop offset="1" stop-color="#dd3020"/></linearGradient></defs><ellipse cx="14" cy="27.5" rx="11" ry="1.6" fill="#ccc" opacity="0.6"/><circle cx="14" cy="13.5" r="13" fill="url(#rg)" stroke="#c84040" stroke-width="1"/><path d="M9 8.5 L19 18.5 M19 8.5 L9 18.5" stroke="#fff" stroke-width="4.2" stroke-linecap="round"/></svg>
<svg width="28" height="30" viewBox="0 0 28 30" style="position:absolute;left:1884px;top:586.5px;"><defs><linearGradient id="rg" x1="0" y1="0" x2="0" y2="1"><stop offset="0" stop-color="#f0a0a0"/><stop offset="0.5" stop-color="#e05a5a"/><stop offset="1" stop-color="#dd3020"/></linearGradient></defs><ellipse cx="14" cy="27.5" rx="11" ry="1.6" fill="#ccc" opacity="0.6"/><circle cx="14" cy="13.5" r="13" fill="url(#rg)" stroke="#c84040" stroke-width="1"/><path d="M9 8.5 L19 18.5 M19 8.5 L9 18.5" stroke="#fff" stroke-width="4.2" stroke-linecap="round"/></svg>
<svg width="28" height="30" viewBox="0 0 28 30" style="position:absolute;left:1969px;top:586.5px;"><defs><linearGradient id="rg" x1="0" y1="0" x2="0" y2="1"><stop offset="0" stop-color="#f0a0a0"/><stop offset="0.5" stop-color="#e05a5a"/><stop offset="1" stop-color="#dd3020"/></linearGradient></defs><ellipse cx="14" cy="27.5" rx="11" ry="1.6" fill="#ccc" opacity="0.6"/><circle cx="14" cy="13.5" r="13" fill="url(#rg)" stroke="#c84040" stroke-width="1"/><path d="M9 8.5 L19 18.5 M19 8.5 L9 18.5" stroke="#fff" stroke-width="4.2" stroke-linecap="round"/></svg>
<div style="position:absolute;left:2271px;top:586.2px;width:59px;height:50px;background:#00c0ef;border-radius:3px;"></div>
<svg width="23" height="16" viewBox="0 0 23 16" style="position:absolute;left:2289px;top:603.2px;"><path d="M1.3 8 Q11.5 -4.5 21.7 8 Q11.5 20.5 1.3 8 Z" stroke="#fff" stroke-width="2" fill="none"/><circle cx="11.5" cy="7.6" r="5" fill="#fff"/><path d="M8.3 6.5 A3.2 3.2 0 0 1 11 4.2" stroke="#00c0ef" stroke-width="0.9" fill="none"/></svg>
<div style="position:absolute;left:2336px;top:586.2px;width:56px;height:50px;background:#3c8dbc;border-radius:3px;"></div>
<svg width="19" height="19" viewBox="0 0 19 19" style="position:absolute;left:2355px;top:602.2px;"><path d="M13.5 1 L18 5.5 L6 17.5 L1 18.5 L1.5 13 Z" fill="#fff"/><path d="M12 3 L16 7" stroke="#3c8dbc" stroke-width="1.4"/></svg>
<div style="position:absolute;left:2397px;top:586.2px;width:55px;height:50px;background:#dd4b39;border-radius:3px;"></div>
<svg width="17" height="20" viewBox="0 0 17 20" style="position:absolute;left:2416px;top:601.2px;"><path d="M0.5 4 L16.5 4" stroke="#fff" stroke-width="2"/><path d="M5.5 4 L5.5 1.5 Q5.5 0.8 6.5 0.8 L10.5 0.8 Q11.5 0.8 11.5 1.5 L11.5 4" stroke="#fff" stroke-width="1.8" fill="none"/><path d="M2.5 4 L3 18 Q3 19 4 19 L13 19 Q14 19 14 18 L14.5 4" stroke="#fff" stroke-width="2" fill="none"/><path d="M6.3 7 L6.3 16 M8.5 7 L8.5 16 M10.7 7 L10.7 16" stroke="#fff" stroke-width="1.5"/></svg>
<div style="position:absolute;left:2458px;top:586.2px;width:65px;height:50px;background:#f4f4f4;border:1.5px solid #ddd;border-radius:3px;"></div>
<svg width="18.5" height="18" viewBox="0 0 18.5 18" style="position:absolute;left:2481.5px;top:601.5px;"><path d="M2 8.5 A7.2 7.2 0 0 1 14.8 4.6" stroke="#333" stroke-width="3" fill="none"/><path d="M18.3 1.2 L18.3 8.6 L11 8.6 Z" fill="#333"/><path d="M16.5 9.5 A7.2 7.2 0 0 1 3.7 13.4" stroke="#333" stroke-width="3" fill="none"/><path d="M0.2 16.8 L0.2 9.4 L7.5 9.4 Z" fill="#333"/></svg>
<div style="position:absolute;left:2529px;top:586.2px;width:59px;height:50px;background:#f4f4f4;border:1.5px solid #ddd;border-radius:3px;"></div>
<svg width="21" height="19" viewBox="0 0 21 19" style="position:absolute;left:2548px;top:600.2px;"><rect x="0" y="0" width="21" height="19" fill="#333"/><rect x="2.2" y="2.2" width="16.6" height="14.6" fill="#f4f4f4"/><circle cx="6" cy="6" r="2.2" fill="#333"/><path d="M2.2 16.8 L2.2 14 L7 9.5 L10 12.5 L15 6.5 L18.8 10 L18.8 16.8 Z" fill="#333"/></svg>
<div class="t" style="right:2151px;top:665.0px;font-size:21px;line-height:21px;color:#333;text-align:right;">131</div>
<div class="t" style="left:529px;top:665.0px;font-size:21px;line-height:21px;color:#333;">现代简约茶桌黑白款烤漆茶几桌小户型客厅家具</div>
<div class="t" style="left:1121px;top:665.0px;font-size:21px;line-height:21px;color:#333;">TP0000131</div>
<div class="t" style="left:1291px;top:665.0px;font-size:21px;line-height:21px;color:#333;">普通商品</div>
<div class="t" style="left:1429.5px;top:665.0px;font-size:21px;line-height:21px;color:#333;">2366.00</div>
<div style="position:absolute;left:1558px;top:661.3px;width:85px;height:38px;background:#fff;border:1px solid #8a8a8a;border-radius:2px;"></div>
<div class="t" style="left:1563.5px;top:668.8px;font-size:21px;line-height:21px;color:#222;">3335</div>
<div style="position:absolute;left:2053px;top:661.3px;width:85px;height:38px;background:#fff;border:1px solid #8a8a8a;border-radius:2px;"></div>
<div class="t" style="left:2058.5px;top:668.8px;font-size:21px;line-height:21px;color:#222;">50</div>
<svg width="28" height="28" viewBox="0 0 28 28" style="position:absolute;left:1714px;top:662.0px;"><defs><linearGradient id="gg" x1="0" y1="0" x2="0" y2="1"><stop offset="0" stop-color="#7cd41e"/><stop offset="1" stop-color="#3d9b16"/></linearGradient></defs><circle cx="14" cy="14" r="13.5" fill="url(#gg)"/><path d="M7 14.5 L12 19 L21 9.5" stroke="#fff" stroke-width="4" fill="none" stroke-linecap="round" stroke-linejoin="round"/></svg>
<svg width="28" height="30" viewBox="0 0 28 30" style="position:absolute;left:1799px;top:661.5px;"><defs><linearGradient id="rg" x1="0" y1="0" x2="0" y2="1"><stop offset="0" stop-color="#f0a0a0"/><stop offset="0.5" stop-color="#e05a5a"/><stop offset="1" stop-color="#dd3020"/></linearGradient></defs><ellipse cx="14" cy="27.5" rx="11" ry="1.6" fill="#ccc" opacity="0.6"/><circle cx="14" cy="13.5" r="13" fill="url(#rg)" stroke="#c84040" stroke-width="1"/><path d="M9 8.5 L19 18.5 M19 8.5 L9 18.5" stroke="#fff" stroke-width="4.2" stroke-linecap="round"/></svg>
<svg width="28" height="30" viewBox="0 0 28 30" style="position:absolute;left:1884px;top:661.5px;"><defs><linearGradient id="rg" x1="0" y1="0" x2="0" y2="1"><stop offset="0" stop-color="#f0a0a0"/><stop offset="0.5" stop-color="#e05a5a"/><stop offset="1" stop-color="#dd3020"/></linearGradient></defs><ellipse cx="14" cy="27.5" rx="11" ry="1.6" fill="#ccc" opacity="0.6"/><circle cx="14" cy="13.5" r="13" fill="url(#rg)" stroke="#c84040" stroke-width="1"/><path d="M9 8.5 L19 18.5 M19 8.5 L9 18.5" stroke="#fff" stroke-width="4.2" stroke-linecap="round"/></svg>
<svg width="28" height="30" viewBox="0 0 28 30" style="position:absolute;left:1969px;top:661.5px;"><defs><linearGradient id="rg" x1="0" y1="0" x2="0" y2="1"><stop offset="0" stop-color="#f0a0a0"/><stop offset="0.5" stop-color="#e05a5a"/><stop offset="1" stop-color="#dd3020"/></linearGradient></defs><ellipse cx="14" cy="27.5" rx="11" ry="1.6" fill="#ccc" opacity="0.6"/><circle cx="14" cy="13.5" r="13" fill="url(#rg)" stroke="#c84040" stroke-width="1"/><path d="M9 8.5 L19 18.5 M19 8.5 L9 18.5" stroke="#fff" stroke-width="4.2" stroke-linecap="round"/></svg>
<div style="position:absolute;left:2271px;top:661.2px;width:59px;height:50px;background:#00c0ef;border-radius:3px;"></div>
<svg width="23" height="16" viewBox="0 0 23 16" style="position:absolute;left:2289px;top:678.2px;"><path d="M1.3 8 Q11.5 -4.5 21.7 8 Q11.5 20.5 1.3 8 Z" stroke="#fff" stroke-width="2" fill="none"/><circle cx="11.5" cy="7.6" r="5" fill="#fff"/><path d="M8.3 6.5 A3.2 3.2 0 0 1 11 4.2" stroke="#00c0ef" stroke-width="0.9" fill="none"/></svg>
<div style="position:absolute;left:2336px;top:661.2px;width:56px;height:50px;background:#3c8dbc;border-radius:3px;"></div>
<svg width="19" height="19" viewBox="0 0 19 19" style="position:absolute;left:2355px;top:677.2px;"><path d="M13.5 1 L18 5.5 L6 17.5 L1 18.5 L1.5 13 Z" fill="#fff"/><path d="M12 3 L16 7" stroke="#3c8dbc" stroke-width="1.4"/></svg>
<div style="position:absolute;left:2397px;top:661.2px;width:55px;height:50px;background:#dd4b39;border-radius:3px;"></div>
<svg width="17" height="20" viewBox="0 0 17 20" style="position:absolute;left:2416px;top:676.2px;"><path d="M0.5 4 L16.5 4" stroke="#fff" stroke-width="2"/><path d="M5.5 4 L5.5 1.5 Q5.5 0.8 6.5 0.8 L10.5 0.8 Q11.5 0.8 11.5 1.5 L11.5 4" stroke="#fff" stroke-width="1.8" fill="none"/><path d="M2.5 4 L3 18 Q3 19 4 19 L13 19 Q14 19 14 18 L14.5 4" stroke="#fff" stroke-width="2" fill="none"/><path d="M6.3 7 L6.3 16 M8.5 7 L8.5 16 M10.7 7 L10.7 16" stroke="#fff" stroke-width="1.5"/></svg>
<div style="position:absolute;left:2458px;top:661.2px;width:65px;height:50px;background:#f4f4f4;border:1.5px solid #ddd;border-radius:3px;"></div>
<svg width="18.5" height="18" viewBox="0 0 18.5 18" style="position:absolute;left:2481.5px;top:676.5px;"><path d="M2 8.5 A7.2 7.2 0 0 1 14.8 4.6" stroke="#333" stroke-width="3" fill="none"/><path d="M18.3 1.2 L18.3 8.6 L11 8.6 Z" fill="#333"/><path d="M16.5 9.5 A7.2 7.2 0 0 1 3.7 13.4" stroke="#333" stroke-width="3" fill="none"/><path d="M0.2 16.8 L0.2 9.4 L7.5 9.4 Z" fill="#333"/></svg>
<div style="position:absolute;left:2529px;top:661.2px;width:59px;height:50px;background:#f4f4f4;border:1.5px solid #ddd;border-radius:3px;"></div>
<svg width="21" height="19" viewBox="0 0 21 19" style="position:absolute;left:2548px;top:675.2px;"><rect x="0" y="0" width="21" height="19" fill="#333"/><rect x="2.2" y="2.2" width="16.6" height="14.6" fill="#f4f4f4"/><circle cx="6" cy="6" r="2.2" fill="#333"/><path d="M2.2 16.8 L2.2 14 L7 9.5 L10 12.5 L15 6.5 L18.8 10 L18.8 16.8 Z" fill="#333"/></svg>
<div class="t" style="right:2151px;top:740.0px;font-size:21px;line-height:21px;color:#333;text-align:right;">130</div>
<div class="t" style="left:529px;top:740.0px;font-size:21px;line-height:21px;color:#333;">按摩垫按摩椅垫腰部按摩器</div>
<div class="t" style="left:1121px;top:740.0px;font-size:21px;line-height:21px;color:#333;">TP0000130</div>
<div class="t" style="left:1291px;top:740.0px;font-size:21px;line-height:21px;color:#333;">普通商品</div>
<div class="t" style="left:1429.5px;top:740.0px;font-size:21px;line-height:21px;color:#333;">1688.00</div>
<div style="position:absolute;left:1558px;top:736.3px;width:85px;height:38px;background:#fff;border:1px solid #8a8a8a;border-radius:2px;"></div>
<div class="t" style="left:1563.5px;top:743.8px;font-size:21px;line-height:21px;color:#222;">1349</div>
<div style="position:absolute;left:2053px;top:736.3px;width:85px;height:38px;background:#fff;border:1px solid #8a8a8a;border-radius:2px;"></div>
<div class="t" style="left:2058.5px;top:743.8px;font-size:21px;line-height:21px;color:#222;">50</div>
<svg width="28" height="28" viewBox="0 0 28 28" style="position:absolute;left:1714px;top:737.0px;"><defs><linearGradient id="gg" x1="0" y1="0" x2="0" y2="1"><stop offset="0" stop-color="#7cd41e"/><stop offset="1" stop-color="#3d9b16"/></linearGradient></defs><circle cx="14" cy="14" r="13.5" fill="url(#gg)"/><path d="M7 14.5 L12 19 L21 9.5" stroke="#fff" stroke-width="4" fill="none" stroke-linecap="round" stroke-linejoin="round"/></svg>
<svg width="28" height="30" viewBox="0 0 28 30" style="position:absolute;left:1799px;top:736.5px;"><defs><linearGradient id="rg" x1="0" y1="0" x2="0" y2="1"><stop offset="0" stop-color="#f0a0a0"/><stop offset="0.5" stop-color="#e05a5a"/><stop offset="1" stop-color="#dd3020"/></linearGradient></defs><ellipse cx="14" cy="27.5" rx="11" ry="1.6" fill="#ccc" opacity="0.6"/><circle cx="14" cy="13.5" r="13" fill="url(#rg)" stroke="#c84040" stroke-width="1"/><path d="M9 8.5 L19 18.5 M19 8.5 L9 18.5" stroke="#fff" stroke-width="4.2" stroke-linecap="round"/></svg>
<svg width="28" height="30" viewBox="0 0 28 30" style="position:absolute;left:1884px;top:736.5px;"><defs><linearGradient id="rg" x1="0" y1="0" x2="0" y2="1"><stop offset="0" stop-color="#f0a0a0"/><stop offset="0.5" stop-color="#e05a5a"/><stop offset="1" stop-color="#dd3020"/></linearGradient></defs><ellipse cx="14" cy="27.5" rx="11" ry="1.6" fill="#ccc" opacity="0.6"/><circle cx="14" cy="13.5" r="13" fill="url(#rg)" stroke="#c84040" stroke-width="1"/><path d="M9 8.5 L19 18.5 M19 8.5 L9 18.5" stroke="#fff" stroke-width="4.2" stroke-linecap="round"/></svg>
<svg width="28" height="30" viewBox="0 0 28 30" style="position:absolute;left:1969px;top:736.5px;"><defs><linearGradient id="rg" x1="0" y1="0" x2="0" y2="1"><stop offset="0" stop-color="#f0a0a0"/><stop offset="0.5" stop-color="#e05a5a"/><stop offset="1" stop-color="#dd3020"/></linearGradient></defs><ellipse cx="14" cy="27.5" rx="11" ry="1.6" fill="#ccc" opacity="0.6"/><circle cx="14" cy="13.5" r="13" fill="url(#rg)" stroke="#c84040" stroke-width="1"/><path d="M9 8.5 L19 18.5 M19 8.5 L9 18.5" stroke="#fff" stroke-width="4.2" stroke-linecap="round"/></svg>
<div style="position:absolute;left:2271px;top:736.2px;width:59px;height:50px;background:#00c0ef;border-radius:3px;"></div>
<svg width="23" height="16" viewBox="0 0 23 16" style="position:absolute;left:2289px;top:753.2px;"><path d="M1.3 8 Q11.5 -4.5 21.7 8 Q11.5 20.5 1.3 8 Z" stroke="#fff" stroke-width="2" fill="none"/><circle cx="11.5" cy="7.6" r="5" fill="#fff"/><path d="M8.3 6.5 A3.2 3.2 0 0 1 11 4.2" stroke="#00c0ef" stroke-width="0.9" fill="none"/></svg>
<div style="position:absolute;left:2336px;top:736.2px;width:56px;height:50px;background:#3c8dbc;border-radius:3px;"></div>
<svg width="19" height="19" viewBox="0 0 19 19" style="position:absolute;left:2355px;top:752.2px;"><path d="M13.5 1 L18 5.5 L6 17.5 L1 18.5 L1.5 13 Z" fill="#fff"/><path d="M12 3 L16 7" stroke="#3c8dbc" stroke-width="1.4"/></svg>
<div style="position:absolute;left:2397px;top:736.2px;width:55px;height:50px;background:#dd4b39;border-radius:3px;"></div>
<svg width="17" height="20" viewBox="0 0 17 20" style="position:absolute;left:2416px;top:751.2px;"><path d="M0.5 4 L16.5 4" stroke="#fff" stroke-width="2"/><path d="M5.5 4 L5.5 1.5 Q5.5 0.8 6.5 0.8 L10.5 0.8 Q11.5 0.8 11.5 1.5 L11.5 4" stroke="#fff" stroke-width="1.8" fill="none"/><path d="M2.5 4 L3 18 Q3 19 4 19 L13 19 Q14 19 14 18 L14.5 4" stroke="#fff" stroke-width="2" fill="none"/><path d="M6.3 7 L6.3 16 M8.5 7 L8.5 16 M10.7 7 L10.7 16" stroke="#fff" stroke-width="1.5"/></svg>
<div style="position:absolute;left:2458px;top:736.2px;width:65px;height:50px;background:#f4f4f4;border:1.5px solid #ddd;border-radius:3px;"></div>
<svg width="18.5" height="18" viewBox="0 0 18.5 18" style="position:absolute;left:2481.5px;top:751.5px;"><path d="M2 8.5 A7.2 7.2 0 0 1 14.8 4.6" stroke="#333" stroke-width="3" fill="none"/><path d="M18.3 1.2 L18.3 8.6 L11 8.6 Z" fill="#333"/><path d="M16.5 9.5 A7.2 7.2 0 0 1 3.7 13.4" stroke="#333" stroke-width="3" fill="none"/><path d="M0.2 16.8 L0.2 9.4 L7.5 9.4 Z" fill="#333"/></svg>
<div style="position:absolute;left:2529px;top:736.2px;width:59px;height:50px;background:#f4f4f4;border:1.5px solid #ddd;border-radius:3px;"></div>
<svg width="21" height="19" viewBox="0 0 21 19" style="position:absolute;left:2548px;top:750.2px;"><rect x="0" y="0" width="21" height="19" fill="#333"/><rect x="2.2" y="2.2" width="16.6" height="14.6" fill="#f4f4f4"/><circle cx="6" cy="6" r="2.2" fill="#333"/><path d="M2.2 16.8 L2.2 14 L7 9.5 L10 12.5 L15 6.5 L18.8 10 L18.8 16.8 Z" fill="#333"/></svg>
<div class="t" style="right:2151px;top:815.0px;font-size:21px;line-height:21px;color:#333;text-align:right;">129</div>
<div class="t" style="left:529px;top:815.0px;font-size:21px;line-height:21px;color:#333;">猫咪吊床吸盘式单层双</div>
<div class="t" style="left:1121px;top:815.0px;font-size:21px;line-height:21px;color:#333;">TP0000129</div>
<div class="t" style="left:1291px;top:815.0px;font-size:21px;line-height:21px;color:#333;">普通商品</div>
<div class="t" style="left:1429.5px;top:815.0px;font-size:21px;line-height:21px;color:#333;">399.00</div>
<div style="position:absolute;left:1558px;top:811.3px;width:85px;height:38px;background:#fff;border:1px solid #8a8a8a;border-radius:2px;"></div>
<div class="t" style="left:1563.5px;top:818.8px;font-size:21px;line-height:21px;color:#222;">6959</div>
<div style="position:absolute;left:2053px;top:811.3px;width:85px;height:38px;background:#fff;border:1px solid #8a8a8a;border-radius:2px;"></div>
<div class="t" style="left:2058.5px;top:818.8px;font-size:21px;line-height:21px;color:#222;">50</div>
<svg width="28" height="28" viewBox="0 0 28 28" style="position:absolute;left:1714px;top:812.0px;"><defs><linearGradient id="gg" x1="0" y1="0" x2="0" y2="1"><stop offset="0" stop-color="#7cd41e"/><stop offset="1" stop-color="#3d9b16"/></linearGradient></defs><circle cx="14" cy="14" r="13.5" fill="url(#gg)"/><path d="M7 14.5 L12 19 L21 9.5" stroke="#fff" stroke-width="4" fill="none" stroke-linecap="round" stroke-linejoin="round"/></svg>
<svg width="28" height="30" viewBox="0 0 28 30" style="position:absolute;left:1799px;top:811.5px;"><defs><linearGradient id="rg" x1="0" y1="0" x2="0" y2="1"><stop offset="0" stop-color="#f0a0a0"/><stop offset="0.5" stop-color="#e05a5a"/><stop offset="1" stop-color="#dd3020"/></linearGradient></defs><ellipse cx="14" cy="27.5" rx="11" ry="1.6" fill="#ccc" opacity="0.6"/><circle cx="14" cy="13.5" r="13" fill="url(#rg)" stroke="#c84040" stroke-width="1"/><path d="M9 8.5 L19 18.5 M19 8.5 L9 18.5" stroke="#fff" stroke-width="4.2" stroke-linecap="round"/></svg>
<svg width="28" height="30" viewBox="0 0 28 30" style="position:absolute;left:1884px;top:811.5px;"><defs><linearGradient id="rg" x1="0" y1="0" x2="0" y2="1"><stop offset="0" stop-color="#f0a0a0"/><stop offset="0.5" stop-color="#e05a5a"/><stop offset="1" stop-color="#dd3020"/></linearGradient></defs><ellipse cx="14" cy="27.5" rx="11" ry="1.6" fill="#ccc" opacity="0.6"/><circle cx="14" cy="13.5" r="13" fill="url(#rg)" stroke="#c84040" stroke-width="1"/><path d="M9 8.5 L19 18.5 M19 8.5 L9 18.5" stroke="#fff" stroke-width="4.2" stroke-linecap="round"/></svg>
<svg width="28" height="30" viewBox="0 0 28 30" style="position:absolute;left:1969px;top:811.5px;"><defs><linearGradient id="rg" x1="0" y1="0" x2="0" y2="1"><stop offset="0" stop-color="#f0a0a0"/><stop offset="0.5" stop-color="#e05a5a"/><stop offset="1" stop-color="#dd3020"/></linearGradient></defs><ellipse cx="14" cy="27.5" rx="11" ry="1.6" fill="#ccc" opacity="0.6"/><circle cx="14" cy="13.5" r="13" fill="url(#rg)" stroke="#c84040" stroke-width="1"/><path d="M9 8.5 L19 18.5 M19 8.5 L9 18.5" stroke="#fff" stroke-width="4.2" stroke-linecap="round"/></svg>
<div style="position:absolute;left:2271px;top:811.2px;width:59px;height:50px;background:#00c0ef;border-radius:3px;"></div>
<svg width="23" height="16" viewBox="0 0 23 16" style="position:absolute;left:2289px;top:828.2px;"><path d="M1.3 8 Q11.5 -4.5 21.7 8 Q11.5 20.5 1.3 8 Z" stroke="#fff" stroke-width="2" fill="none"/><circle cx="11.5" cy="7.6" r="5" fill="#fff"/><path d="M8.3 6.5 A3.2 3.2 0 0 1 11 4.2" stroke="#00c0ef" stroke-width="0.9" fill="none"/></svg>
<div style="position:absolute;left:2336px;top:811.2px;width:56px;height:50px;background:#3c8dbc;border-radius:3px;"></div>
<svg width="19" height="19" viewBox="0 0 19 19" style="position:absolute;left:2355px;top:827.2px;"><path d="M13.5 1 L18 5.5 L6 17.5 L1 18.5 L1.5 13 Z" fill="#fff"/><path d="M12 3 L16 7" stroke="#3c8dbc" stroke-width="1.4"/></svg>
<div style="position:absolute;left:2397px;top:811.2px;width:55px;height:50px;background:#dd4b39;border-radius:3px;"></div>
<svg width="17" height="20" viewBox="0 0 17 20" style="position:absolute;left:2416px;top:826.2px;"><path d="M0.5 4 L16.5 4" stroke="#fff" stroke-width="2"/><path d="M5.5 4 L5.5 1.5 Q5.5 0.8 6.5 0.8 L10.5 0.8 Q11.5 0.8 11.5 1.5 L11.5 4" stroke="#fff" stroke-width="1.8" fill="none"/><path d="M2.5 4 L3 18 Q3 19 4 19 L13 19 Q14 19 14 18 L14.5 4" stroke="#fff" stroke-width="2" fill="none"/><path d="M6.3 7 L6.3 16 M8.5 7 L8.5 16 M10.7 7 L10.7 16" stroke="#fff" stroke-width="1.5"/></svg>
<div style="position:absolute;left:2458px;top:811.2px;width:65px;height:50px;background:#f4f4f4;border:1.5px solid #ddd;border-radius:3px;"></div>
<svg width="18.5" height="18" viewBox="0 0 18.5 18" style="position:absolute;left:2481.5px;top:826.5px;"><path d="M2 8.5 A7.2 7.2 0 0 1 14.8 4.6" stroke="#333" stroke-width="3" fill="none"/><path d="M18.3 1.2 L18.3 8.6 L11 8.6 Z" fill="#333"/><path d="M16.5 9.5 A7.2 7.2 0 0 1 3.7 13.4" stroke="#333" stroke-width="3" fill="none"/><path d="M0.2 16.8 L0.2 9.4 L7.5 9.4 Z" fill="#333"/></svg>
<div style="position:absolute;left:2529px;top:811.2px;width:59px;height:50px;background:#f4f4f4;border:1.5px solid #ddd;border-radius:3px;"></div>
<svg width="21" height="19" viewBox="0 0 21 19" style="position:absolute;left:2548px;top:825.2px;"><rect x="0" y="0" width="21" height="19" fill="#333"/><rect x="2.2" y="2.2" width="16.6" height="14.6" fill="#f4f4f4"/><circle cx="6" cy="6" r="2.2" fill="#333"/><path d="M2.2 16.8 L2.2 14 L7 9.5 L10 12.5 L15 6.5 L18.8 10 L18.8 16.8 Z" fill="#333"/></svg>
<div class="t" style="right:2151px;top:890.0px;font-size:21px;line-height:21px;color:#333;text-align:right;">128</div>
<div class="t" style="left:529px;top:890.0px;font-size:21px;line-height:21px;color:#333;">贪杯龙精酿啤酒 6箱组合套装</div>
<div class="t" style="left:1121px;top:890.0px;font-size:21px;line-height:21px;color:#333;">TP0000128</div>
<div class="t" style="left:1291px;top:890.0px;font-size:21px;line-height:21px;color:#333;">普通商品</div>
<div class="t" style="left:1429.5px;top:890.0px;font-size:21px;line-height:21px;color:#333;">688.00</div>
<div style="position:absolute;left:1558px;top:886.3px;width:85px;height:38px;background:#fff;border:1px solid #8a8a8a;border-radius:2px;"></div>
<div class="t" style="left:1563.5px;top:893.8px;font-size:21px;line-height:21px;color:#222;">4848</div>
<div style="position:absolute;left:2053px;top:886.3px;width:85px;height:38px;background:#fff;border:1px solid #8a8a8a;border-radius:2px;"></div>
<div class="t" style="left:2058.5px;top:893.8px;font-size:21px;line-height:21px;color:#222;">50</div>
<svg width="28" height="28" viewBox="0 0 28 28" style="position:absolute;left:1714px;top:887.0px;"><defs><linearGradient id="gg" x1="0" y1="0" x2="0" y2="1"><stop offset="0" stop-color="#7cd41e"/><stop offset="1" stop-color="#3d9b16"/></linearGradient></defs><circle cx="14" cy="14" r="13.5" fill="url(#gg)"/><path d="M7 14.5 L12 19 L21 9.5" stroke="#fff" stroke-width="4" fill="none" stroke-linecap="round" stroke-linejoin="round"/></svg>
<svg width="28" height="30" viewBox="0 0 28 30" style="position:absolute;left:1799px;top:886.5px;"><defs><linearGradient id="rg" x1="0" y1="0" x2="0" y2="1"><stop offset="0" stop-color="#f0a0a0"/><stop offset="0.5" stop-color="#e05a5a"/><stop offset="1" stop-color="#dd3020"/></linearGradient></defs><ellipse cx="14" cy="27.5" rx="11" ry="1.6" fill="#ccc" opacity="0.6"/><circle cx="14" cy="13.5" r="13" fill="url(#rg)" stroke="#c84040" stroke-width="1"/><path d="M9 8.5 L19 18.5 M19 8.5 L9 18.5" stroke="#fff" stroke-width="4.2" stroke-linecap="round"/></svg>
<svg width="28" height="30" viewBox="0 0 28 30" style="position:absolute;left:1884px;top:886.5px;"><defs><linearGradient id="rg" x1="0" y1="0" x2="0" y2="1"><stop offset="0" stop-color="#f0a0a0"/><stop offset="0.5" stop-color="#e05a5a"/><stop offset="1" stop-color="#dd3020"/></linearGradient></defs><ellipse cx="14" cy="27.5" rx="11" ry="1.6" fill="#ccc" opacity="0.6"/><circle cx="14" cy="13.5" r="13" fill="url(#rg)" stroke="#c84040" stroke-width="1"/><path d="M9 8.5 L19 18.5 M19 8.5 L9 18.5" stroke="#fff" stroke-width="4.2" stroke-linecap="round"/></svg>
<svg width="28" height="30" viewBox="0 0 28 30" style="position:absolute;left:1969px;top:886.5px;"><defs><linearGradient id="rg" x1="0" y1="0" x2="0" y2="1"><stop offset="0" stop-color="#f0a0a0"/><stop offset="0.5" stop-color="#e05a5a"/><stop offset="1" stop-color="#dd3020"/></linearGradient></defs><ellipse cx="14" cy="27.5" rx="11" ry="1.6" fill="#ccc" opacity="0.6"/><circle cx="14" cy="13.5" r="13" fill="url(#rg)" stroke="#c84040" stroke-width="1"/><path d="M9 8.5 L19 18.5 M19 8.5 L9 18.5" stroke="#fff" stroke-width="4.2" stroke-linecap="round"/></svg>
<div style="position:absolute;left:2271px;top:886.2px;width:59px;height:50px;background:#00c0ef;border-radius:3px;"></div>
<svg width="23" height="16" viewBox="0 0 23 16" style="position:absolute;left:2289px;top:903.2px;"><path d="M1.3 8 Q11.5 -4.5 21.7 8 Q11.5 20.5 1.3 8 Z" stroke="#fff" stroke-width="2" fill="none"/><circle cx="11.5" cy="7.6" r="5" fill="#fff"/><path d="M8.3 6.5 A3.2 3.2 0 0 1 11 4.2" stroke="#00c0ef" stroke-width="0.9" fill="none"/></svg>
<div style="position:absolute;left:2336px;top:886.2px;width:56px;height:50px;background:#3c8dbc;border-radius:3px;"></div>
<svg width="19" height="19" viewBox="0 0 19 19" style="position:absolute;left:2355px;top:902.2px;"><path d="M13.5 1 L18 5.5 L6 17.5 L1 18.5 L1.5 13 Z" fill="#fff"/><path d="M12 3 L16 7" stroke="#3c8dbc" stroke-width="1.4"/></svg>
<div style="position:absolute;left:2397px;top:886.2px;width:55px;height:50px;background:#dd4b39;border-radius:3px;"></div>
<svg width="17" height="20" viewBox="0 0 17 20" style="position:absolute;left:2416px;top:901.2px;"><path d="M0.5 4 L16.5 4" stroke="#fff" stroke-width="2"/><path d="M5.5 4 L5.5 1.5 Q5.5 0.8 6.5 0.8 L10.5 0.8 Q11.5 0.8 11.5 1.5 L11.5 4" stroke="#fff" stroke-width="1.8" fill="none"/><path d="M2.5 4 L3 18 Q3 19 4 19 L13 19 Q14 19 14 18 L14.5 4" stroke="#fff" stroke-width="2" fill="none"/><path d="M6.3 7 L6.3 16 M8.5 7 L8.5 16 M10.7 7 L10.7 16" stroke="#fff" stroke-width="1.5"/></svg>
<div style="position:absolute;left:2458px;top:886.2px;width:65px;height:50px;background:#f4f4f4;border:1.5px solid #ddd;border-radius:3px;"></div>
<svg width="18.5" height="18" viewBox="0 0 18.5 18" style="position:absolute;left:2481.5px;top:901.5px;"><path d="M2 8.5 A7.2 7.2 0 0 1 14.8 4.6" stroke="#333" stroke-width="3" fill="none"/><path d="M18.3 1.2 L18.3 8.6 L11 8.6 Z" fill="#333"/><path d="M16.5 9.5 A7.2 7.2 0 0 1 3.7 13.4" stroke="#333" stroke-width="3" fill="none"/><path d="M0.2 16.8 L0.2 9.4 L7.5 9.4 Z" fill="#333"/></svg>
<div style="position:absolute;left:2529px;top:886.2px;width:59px;height:50px;background:#f4f4f4;border:1.5px solid #ddd;border-radius:3px;"></div>
<svg width="21" height="19" viewBox="0 0 21 19" style="position:absolute;left:2548px;top:900.2px;"><rect x="0" y="0" width="21" height="19" fill="#333"/><rect x="2.2" y="2.2" width="16.6" height="14.6" fill="#f4f4f4"/><circle cx="6" cy="6" r="2.2" fill="#333"/><path d="M2.2 16.8 L2.2 14 L7 9.5 L10 12.5 L15 6.5 L18.8 10 L18.8 16.8 Z" fill="#333"/></svg>
<div class="t" style="right:2151px;top:965.0px;font-size:21px;line-height:21px;color:#333;text-align:right;">127</div>
<div class="t" style="left:529px;top:965.0px;font-size:21px;line-height:21px;color:#333;">意大利 Pensofal 经典厨具九件套礼盒 酒红</div>
<div class="t" style="left:1121px;top:965.0px;font-size:21px;line-height:21px;color:#333;">TP0000127</div>
<div class="t" style="left:1291px;top:965.0px;font-size:21px;line-height:21px;color:#333;">普通商品</div>
<div class="t" style="left:1429.5px;top:965.0px;font-size:21px;line-height:21px;color:#333;">1199.00</div>
<div style="position:absolute;left:1558px;top:961.3px;width:85px;height:38px;background:#fff;border:1px solid #8a8a8a;border-radius:2px;"></div>
<div class="t" style="left:1563.5px;top:968.8px;font-size:21px;line-height:21px;color:#222;">9152</div>
<div style="position:absolute;left:2053px;top:961.3px;width:85px;height:38px;background:#fff;border:1px solid #8a8a8a;border-radius:2px;"></div>
<div class="t" style="left:2058.5px;top:968.8px;font-size:21px;line-height:21px;color:#222;">50</div>
<svg width="28" height="28" viewBox="0 0 28 28" style="position:absolute;left:1714px;top:962.0px;"><defs><linearGradient id="gg" x1="0" y1="0" x2="0" y2="1"><stop offset="0" stop-color="#7cd41e"/><stop offset="1" stop-color="#3d9b16"/></linearGradient></defs><circle cx="14" cy="14" r="13.5" fill="url(#gg)"/><path d="M7 14.5 L12 19 L21 9.5" stroke="#fff" stroke-width="4" fill="none" stroke-linecap="round" stroke-linejoin="round"/></svg>
<svg width="28" height="30" viewBox="0 0 28 30" style="position:absolute;left:1799px;top:961.5px;"><defs><linearGradient id="rg" x1="0" y1="0" x2="0" y2="1"><stop offset="0" stop-color="#f0a0a0"/><stop offset="0.5" stop-color="#e05a5a"/><stop offset="1" stop-color="#dd3020"/></linearGradient></defs><ellipse cx="14" cy="27.5" rx="11" ry="1.6" fill="#ccc" opacity="0.6"/><circle cx="14" cy="13.5" r="13" fill="url(#rg)" stroke="#c84040" stroke-width="1"/><path d="M9 8.5 L19 18.5 M19 8.5 L9 18.5" stroke="#fff" stroke-width="4.2" stroke-linecap="round"/></svg>
<svg width="28" height="30" viewBox="0 0 28 30" style="position:absolute;left:1884px;top:961.5px;"><defs><linearGradient id="rg" x1="0" y1="0" x2="0" y2="1"><stop offset="0" stop-color="#f0a0a0"/><stop offset="0.5" stop-color="#e05a5a"/><stop offset="1" stop-color="#dd3020"/></linearGradient></defs><ellipse cx="14" cy="27.5" rx="11" ry="1.6" fill="#ccc" opacity="0.6"/><circle cx="14" cy="13.5" r="13" fill="url(#rg)" stroke="#c84040" stroke-width="1"/><path d="M9 8.5 L19 18.5 M19 8.5 L9 18.5" stroke="#fff" stroke-width="4.2" stroke-linecap="round"/></svg>
<svg width="28" height="30" viewBox="0 0 28 30" style="position:absolute;left:1969px;top:961.5px;"><defs><linearGradient id="rg" x1="0" y1="0" x2="0" y2="1"><stop offset="0" stop-color="#f0a0a0"/><stop offset="0.5" stop-color="#e05a5a"/><stop offset="1" stop-color="#dd3020"/></linearGradient></defs><ellipse cx="14" cy="27.5" rx="11" ry="1.6" fill="#ccc" opacity="0.6"/><circle cx="14" cy="13.5" r="13" fill="url(#rg)" stroke="#c84040" stroke-width="1"/><path d="M9 8.5 L19 18.5 M19 8.5 L9 18.5" stroke="#fff" stroke-width="4.2" stroke-linecap="round"/></svg>
<div style="position:absolute;left:2271px;top:961.2px;width:59px;height:50px;background:#00c0ef;border-radius:3px;"></div>
<svg width="23" height="16" viewBox="0 0 23 16" style="position:absolute;left:2289px;top:978.2px;"><path d="M1.3 8 Q11.5 -4.5 21.7 8 Q11.5 20.5 1.3 8 Z" stroke="#fff" stroke-width="2" fill="none"/><circle cx="11.5" cy="7.6" r="5" fill="#fff"/><path d="M8.3 6.5 A3.2 3.2 0 0 1 11 4.2" stroke="#00c0ef" stroke-width="0.9" fill="none"/></svg>
<div style="position:absolute;left:2336px;top:961.2px;width:56px;height:50px;background:#3c8dbc;border-radius:3px;"></div>
<svg width="19" height="19" viewBox="0 0 19 19" style="position:absolute;left:2355px;top:977.2px;"><path d="M13.5 1 L18 5.5 L6 17.5 L1 18.5 L1.5 13 Z" fill="#fff"/><path d="M12 3 L16 7" stroke="#3c8dbc" stroke-width="1.4"/></svg>
<div style="position:absolute;left:2397px;top:961.2px;width:55px;height:50px;background:#dd4b39;border-radius:3px;"></div>
<svg width="17" height="20" viewBox="0 0 17 20" style="position:absolute;left:2416px;top:976.2px;"><path d="M0.5 4 L16.5 4" stroke="#fff" stroke-width="2"/><path d="M5.5 4 L5.5 1.5 Q5.5 0.8 6.5 0.8 L10.5 0.8 Q11.5 0.8 11.5 1.5 L11.5 4" stroke="#fff" stroke-width="1.8" fill="none"/><path d="M2.5 4 L3 18 Q3 19 4 19 L13 19 Q14 19 14 18 L14.5 4" stroke="#fff" stroke-width="2" fill="none"/><path d="M6.3 7 L6.3 16 M8.5 7 L8.5 16 M10.7 7 L10.7 16" stroke="#fff" stroke-width="1.5"/></svg>
<div style="position:absolute;left:2458px;top:961.2px;width:65px;height:50px;background:#f4f4f4;border:1.5px solid #ddd;border-radius:3px;"></div>
<svg width="18.5" height="18" viewBox="0 0 18.5 18" style="position:absolute;left:2481.5px;top:976.5px;"><path d="M2 8.5 A7.2 7.2 0 0 1 14.8 4.6" stroke="#333" stroke-width="3" fill="none"/><path d="M18.3 1.2 L18.3 8.6 L11 8.6 Z" fill="#333"/><path d="M16.5 9.5 A7.2 7.2 0 0 1 3.7 13.4" stroke="#333" stroke-width="3" fill="none"/><path d="M0.2 16.8 L0.2 9.4 L7.5 9.4 Z" fill="#333"/></svg>
<div style="position:absolute;left:2529px;top:961.2px;width:59px;height:50px;background:#f4f4f4;border:1.5px solid #ddd;border-radius:3px;"></div>
<svg width="21" height="19" viewBox="0 0 21 19" style="position:absolute;left:2548px;top:975.2px;"><rect x="0" y="0" width="21" height="19" fill="#333"/><rect x="2.2" y="2.2" width="16.6" height="14.6" fill="#f4f4f4"/><circle cx="6" cy="6" r="2.2" fill="#333"/><path d="M2.2 16.8 L2.2 14 L7 9.5 L10 12.5 L15 6.5 L18.8 10 L18.8 16.8 Z" fill="#333"/></svg>
<div class="t" style="right:2151px;top:1040.0px;font-size:21px;line-height:21px;color:#333;text-align:right;">126</div>
<div class="t" style="left:529px;top:1040.0px;font-size:21px;line-height:21px;color:#333;">盘尼宫城堡干红葡萄酒</div>
<div class="t" style="left:1121px;top:1040.0px;font-size:21px;line-height:21px;color:#333;">TP0000126</div>
<div class="t" style="left:1291px;top:1040.0px;font-size:21px;line-height:21px;color:#333;">普通商品</div>
<div class="t" style="left:1429.5px;top:1040.0px;font-size:21px;line-height:21px;color:#333;">588.00</div>
<div style="position:absolute;left:1558px;top:1036.3px;width:85px;height:38px;background:#fff;border:1px solid #8a8a8a;border-radius:2px;"></div>
<div class="t" style="left:1563.5px;top:1043.8px;font-size:21px;line-height:21px;color:#222;">3388</div>
<div style="position:absolute;left:2053px;top:1036.3px;width:85px;height:38px;background:#fff;border:1px solid #8a8a8a;border-radius:2px;"></div>
<div class="t" style="left:2058.5px;top:1043.8px;font-size:21px;line-height:21px;color:#222;">50</div>
<svg width="28" height="28" viewBox="0 0 28 28" style="position:absolute;left:1714px;top:1037.0px;"><defs><linearGradient id="gg" x1="0" y1="0" x2="0" y2="1"><stop offset="0" stop-color="#7cd41e"/><stop offset="1" stop-color="#3d9b16"/></linearGradient></defs><circle cx="14" cy="14" r="13.5" fill="url(#gg)"/><path d="M7 14.5 L12 19 L21 9.5" stroke="#fff" stroke-width="4" fill="none" stroke-linecap="round" stroke-linejoin="round"/></svg>
<svg width="28" height="30" viewBox="0 0 28 30" style="position:absolute;left:1799px;top:1036.5px;"><defs><linearGradient id="rg" x1="0" y1="0" x2="0" y2="1"><stop offset="0" stop-color="#f0a0a0"/><stop offset="0.5" stop-color="#e05a5a"/><stop offset="1" stop-color="#dd3020"/></linearGradient></defs><ellipse cx="14" cy="27.5" rx="11" ry="1.6" fill="#ccc" opacity="0.6"/><circle cx="14" cy="13.5" r="13" fill="url(#rg)" stroke="#c84040" stroke-width="1"/><path d="M9 8.5 L19 18.5 M19 8.5 L9 18.5" stroke="#fff" stroke-width="4.2" stroke-linecap="round"/></svg>
<svg width="28" height="30" viewBox="0 0 28 30" style="position:absolute;left:1884px;top:1036.5px;"><defs><linearGradient id="rg" x1="0" y1="0" x2="0" y2="1"><stop offset="0" stop-color="#f0a0a0"/><stop offset="0.5" stop-color="#e05a5a"/><stop offset="1" stop-color="#dd3020"/></linearGradient></defs><ellipse cx="14" cy="27.5" rx="11" ry="1.6" fill="#ccc" opacity="0.6"/><circle cx="14" cy="13.5" r="13" fill="url(#rg)" stroke="#c84040" stroke-width="1"/><path d="M9 8.5 L19 18.5 M19 8.5 L9 18.5" stroke="#fff" stroke-width="4.2" stroke-linecap="round"/></svg>
<svg width="28" height="30" viewBox="0 0 28 30" style="position:absolute;left:1969px;top:1036.5px;"><defs><linearGradient id="rg" x1="0" y1="0" x2="0" y2="1"><stop offset="0" stop-color="#f0a0a0"/><stop offset="0.5" stop-color="#e05a5a"/><stop offset="1" stop-color="#dd3020"/></linearGradient></defs><ellipse cx="14" cy="27.5" rx="11" ry="1.6" fill="#ccc" opacity="0.6"/><circle cx="14" cy="13.5" r="13" fill="url(#rg)" stroke="#c84040" stroke-width="1"/><path d="M9 8.5 L19 18.5 M19 8.5 L9 18.5" stroke="#fff" stroke-width="4.2" stroke-linecap="round"/></svg>
<div style="position:absolute;left:2271px;top:1036.2px;width:59px;height:50px;background:#00c0ef;border-radius:3px;"></div>
<svg width="23" height="16" viewBox="0 0 23 16" style="position:absolute;left:2289px;top:1053.2px;"><path d="M1.3 8 Q11.5 -4.5 21.7 8 Q11.5 20.5 1.3 8 Z" stroke="#fff" stroke-width="2" fill="none"/><circle cx="11.5" cy="7.6" r="5" fill="#fff"/><path d="M8.3 6.5 A3.2 3.2 0 0 1 11 4.2" stroke="#00c0ef" stroke-width="0.9" fill="none"/></svg>
<div style="position:absolute;left:2336px;top:1036.2px;width:56px;height:50px;background:#3c8dbc;border-radius:3px;"></div>
<svg width="19" height="19" viewBox="0 0 19 19" style="position:absolute;left:2355px;top:1052.2px;"><path d="M13.5 1 L18 5.5 L6 17.5 L1 18.5 L1.5 13 Z" fill="#fff"/><path d="M12 3 L16 7" stroke="#3c8dbc" stroke-width="1.4"/></svg>
<div style="position:absolute;left:2397px;top:1036.2px;width:55px;height:50px;background:#dd4b39;border-radius:3px;"></div>
<svg width="17" height="20" viewBox="0 0 17 20" style="position:absolute;left:2416px;top:1051.2px;"><path d="M0.5 4 L16.5 4" stroke="#fff" stroke-width="2"/><path d="M5.5 4 L5.5 1.5 Q5.5 0.8 6.5 0.8 L10.5 0.8 Q11.5 0.8 11.5 1.5 L11.5 4" stroke="#fff" stroke-width="1.8" fill="none"/><path d="M2.5 4 L3 18 Q3 19 4 19 L13 19 Q14 19 14 18 L14.5 4" stroke="#fff" stroke-width="2" fill="none"/><path d="M6.3 7 L6.3 16 M8.5 7 L8.5 16 M10.7 7 L10.7 16" stroke="#fff" stroke-width="1.5"/></svg>
<div style="position:absolute;left:2458px;top:1036.2px;width:65px;height:50px;background:#f4f4f4;border:1.5px solid #ddd;border-radius:3px;"></div>
<svg width="18.5" height="18" viewBox="0 0 18.5 18" style="position:absolute;left:2481.5px;top:1051.5px;"><path d="M2 8.5 A7.2 7.2 0 0 1 14.8 4.6" stroke="#333" stroke-width="3" fill="none"/><path d="M18.3 1.2 L18.3 8.6 L11 8.6 Z" fill="#333"/><path d="M16.5 9.5 A7.2 7.2 0 0 1 3.7 13.4" stroke="#333" stroke-width="3" fill="none"/><path d="M0.2 16.8 L0.2 9.4 L7.5 9.4 Z" fill="#333"/></svg>
<div style="position:absolute;left:2529px;top:1036.2px;width:59px;height:50px;background:#f4f4f4;border:1.5px solid #ddd;border-radius:3px;"></div>
<svg width="21" height="19" viewBox="0 0 21 19" style="position:absolute;left:2548px;top:1050.2px;"><rect x="0" y="0" width="21" height="19" fill="#333"/><rect x="2.2" y="2.2" width="16.6" height="14.6" fill="#f4f4f4"/><circle cx="6" cy="6" r="2.2" fill="#333"/><path d="M2.2 16.8 L2.2 14 L7 9.5 L10 12.5 L15 6.5 L18.8 10 L18.8 16.8 Z" fill="#333"/></svg>
<div class="t" style="right:2151px;top:1115.0px;font-size:21px;line-height:21px;color:#333;text-align:right;">125</div>
<div class="t" style="left:529px;top:1115.0px;font-size:21px;line-height:21px;color:#333;">空气净化器家用 智能除甲醛 过滤雾霾</div>
<div class="t" style="left:1121px;top:1115.0px;font-size:21px;line-height:21px;color:#333;">TP0000125</div>
<div class="t" style="left:1291px;top:1115.0px;font-size:21px;line-height:21px;color:#333;">普通商品</div>
<div class="t" style="left:1429.5px;top:1115.0px;font-size:21px;line-height:21px;color:#333;">2599.00</div>
<div style="position:absolute;left:1558px;top:1111.3px;width:85px;height:38px;background:#fff;border:1px solid #8a8a8a;border-radius:2px;"></div>
<div class="t" style="left:1563.5px;top:1118.8px;font-size:21px;line-height:21px;color:#222;">659</div>
<div style="position:absolute;left:2053px;top:1111.3px;width:85px;height:38px;background:#fff;border:1px solid #8a8a8a;border-radius:2px;"></div>
<div class="t" style="left:2058.5px;top:1118.8px;font-size:21px;line-height:21px;color:#222;">50</div>
<svg width="28" height="28" viewBox="0 0 28 28" style="position:absolute;left:1714px;top:1112.0px;"><defs><linearGradient id="gg" x1="0" y1="0" x2="0" y2="1"><stop offset="0" stop-color="#7cd41e"/><stop offset="1" stop-color="#3d9b16"/></linearGradient></defs><circle cx="14" cy="14" r="13.5" fill="url(#gg)"/><path d="M7 14.5 L12 19 L21 9.5" stroke="#fff" stroke-width="4" fill="none" stroke-linecap="round" stroke-linejoin="round"/></svg>
<svg width="28" height="30" viewBox="0 0 28 30" style="position:absolute;left:1799px;top:1111.5px;"><defs><linearGradient id="rg" x1="0" y1="0" x2="0" y2="1"><stop offset="0" stop-color="#f0a0a0"/><stop offset="0.5" stop-color="#e05a5a"/><stop offset="1" stop-color="#dd3020"/></linearGradient></defs><ellipse cx="14" cy="27.5" rx="11" ry="1.6" fill="#ccc" opacity="0.6"/><circle cx="14" cy="13.5" r="13" fill="url(#rg)" stroke="#c84040" stroke-width="1"/><path d="M9 8.5 L19 18.5 M19 8.5 L9 18.5" stroke="#fff" stroke-width="4.2" stroke-linecap="round"/></svg>
<svg width="28" height="30" viewBox="0 0 28 30" style="position:absolute;left:1884px;top:1111.5px;"><defs><linearGradient id="rg" x1="0" y1="0" x2="0" y2="1"><stop offset="0" stop-color="#f0a0a0"/><stop offset="0.5" stop-color="#e05a5a"/><stop offset="1" stop-color="#dd3020"/></linearGradient></defs><ellipse cx="14" cy="27.5" rx="11" ry="1.6" fill="#ccc" opacity="0.6"/><circle cx="14" cy="13.5" r="13" fill="url(#rg)" stroke="#c84040" stroke-width="1"/><path d="M9 8.5 L19 18.5 M19 8.5 L9 18.5" stroke="#fff" stroke-width="4.2" stroke-linecap="round"/></svg>
<svg width="28" height="30" viewBox="0 0 28 30" style="position:absolute;left:1969px;top:1111.5px;"><defs><linearGradient id="rg" x1="0" y1="0" x2="0" y2="1"><stop offset="0" stop-color="#f0a0a0"/><stop offset="0.5" stop-color="#e05a5a"/><stop offset="1" stop-color="#dd3020"/></linearGradient></defs><ellipse cx="14" cy="27.5" rx="11" ry="1.6" fill="#ccc" opacity="0.6"/><circle cx="14" cy="13.5" r="13" fill="url(#rg)" stroke="#c84040" stroke-width="1"/><path d="M9 8.5 L19 18.5 M19 8.5 L9 18.5" stroke="#fff" stroke-width="4.2" stroke-linecap="round"/></svg>
<div style="position:absolute;left:2271px;top:1111.2px;width:59px;height:50px;background:#00c0ef;border-radius:3px;"></div>
<svg width="23" height="16" viewBox="0 0 23 16" style="position:absolute;left:2289px;top:1128.2px;"><path d="M1.3 8 Q11.5 -4.5 21.7 8 Q11.5 20.5 1.3 8 Z" stroke="#fff" stroke-width="2" fill="none"/><circle cx="11.5" cy="7.6" r="5" fill="#fff"/><path d="M8.3 6.5 A3.2 3.2 0 0 1 11 4.2" stroke="#00c0ef" stroke-width="0.9" fill="none"/></svg>
<div style="position:absolute;left:2336px;top:1111.2px;width:56px;height:50px;background:#3c8dbc;border-radius:3px;"></div>
<svg width="19" height="19" viewBox="0 0 19 19" style="position:absolute;left:2355px;top:1127.2px;"><path d="M13.5 1 L18 5.5 L6 17.5 L1 18.5 L1.5 13 Z" fill="#fff"/><path d="M12 3 L16 7" stroke="#3c8dbc" stroke-width="1.4"/></svg>
<div style="position:absolute;left:2397px;top:1111.2px;width:55px;height:50px;background:#dd4b39;border-radius:3px;"></div>
<svg width="17" height="20" viewBox="0 0 17 20" style="position:absolute;left:2416px;top:1126.2px;"><path d="M0.5 4 L16.5 4" stroke="#fff" stroke-width="2"/><path d="M5.5 4 L5.5 1.5 Q5.5 0.8 6.5 0.8 L10.5 0.8 Q11.5 0.8 11.5 1.5 L11.5 4" stroke="#fff" stroke-width="1.8" fill="none"/><path d="M2.5 4 L3 18 Q3 19 4 19 L13 19 Q14 19 14 18 L14.5 4" stroke="#fff" stroke-width="2" fill="none"/><path d="M6.3 7 L6.3 16 M8.5 7 L8.5 16 M10.7 7 L10.7 16" stroke="#fff" stroke-width="1.5"/></svg>
<div style="position:absolute;left:2458px;top:1111.2px;width:65px;height:50px;background:#f4f4f4;border:1.5px solid #ddd;border-radius:3px;"></div>
<svg width="18.5" height="18" viewBox="0 0 18.5 18" style="position:absolute;left:2481.5px;top:1126.5px;"><path d="M2 8.5 A7.2 7.2 0 0 1 14.8 4.6" stroke="#333" stroke-width="3" fill="none"/><path d="M18.3 1.2 L18.3 8.6 L11 8.6 Z" fill="#333"/><path d="M16.5 9.5 A7.2 7.2 0 0 1 3.7 13.4" stroke="#333" stroke-width="3" fill="none"/><path d="M0.2 16.8 L0.2 9.4 L7.5 9.4 Z" fill="#333"/></svg>
<div style="position:absolute;left:2529px;top:1111.2px;width:59px;height:50px;background:#f4f4f4;border:1.5px solid #ddd;border-radius:3px;"></div>
<svg width="21" height="19" viewBox="0 0 21 19" style="position:absolute;left:2548px;top:1125.2px;"><rect x="0" y="0" width="21" height="19" fill="#333"/><rect x="2.2" y="2.2" width="16.6" height="14.6" fill="#f4f4f4"/><circle cx="6" cy="6" r="2.2" fill="#333"/><path d="M2.2 16.8 L2.2 14 L7 9.5 L10 12.5 L15 6.5 L18.8 10 L18.8 16.8 Z" fill="#333"/></svg>
<div style="position:absolute;left:2162.4px;top:1234.4px;width:438.1999999999998px;height:49.6px;background:#fafafa;border:1.5px solid #ddd;border-radius:5px;overflow:hidden;"></div>
<div style="position:absolute;left:2162.4px;top:1234.4px;width:49.40000000000009px;height:49.6px;background:#337ab7;border-radius:5px 0 0 5px;"></div>
<div style="position:absolute;left:2259.0px;top:1234.4px;width:1.2px;height:49.6px;background:#ddd;"></div>
<div style="position:absolute;left:2306.9px;top:1234.4px;width:1.2px;height:49.6px;background:#ddd;"></div>
<div style="position:absolute;left:2354.9px;top:1234.4px;width:1.2px;height:49.6px;background:#ddd;"></div>
<div style="position:absolute;left:2402.6px;top:1234.4px;width:1.2px;height:49.6px;background:#ddd;"></div>
<div style="position:absolute;left:2450.6px;top:1234.4px;width:1.2px;height:49.6px;background:#ddd;"></div>
<div style="position:absolute;left:2499.8px;top:1234.4px;width:1.2px;height:49.6px;background:#ddd;"></div>
<div class="t" style="left:1987.3000000000002px;width:400px;text-align:center;top:1247.2px;font-size:21px;line-height:21px;color:#fff;">1</div>
<div class="t" style="left:2035.8999999999996px;width:400px;text-align:center;top:1247.2px;font-size:21px;line-height:21px;color:#666;">2</div>
<div class="t" style="left:2083.55px;width:400px;text-align:center;top:1247.2px;font-size:21px;line-height:21px;color:#666;">3</div>
<div class="t" style="left:2131.5px;width:400px;text-align:center;top:1247.2px;font-size:21px;line-height:21px;color:#666;">4</div>
<div class="t" style="left:2179.35px;width:400px;text-align:center;top:1247.2px;font-size:21px;line-height:21px;color:#666;">5</div>
<div class="t" style="left:2227.2px;width:400px;text-align:center;top:1247.2px;font-size:21px;line-height:21px;color:#666;">6</div>
<div class="t" style="left:2275.8px;width:400px;text-align:center;top:1247.2px;font-size:21px;line-height:21px;color:#666;">7</div>
<div class="t" style="left:2350.5px;width:400px;text-align:center;top:1247.2px;font-size:21px;line-height:21px;color:#666;">下一页</div>
</body></html>
